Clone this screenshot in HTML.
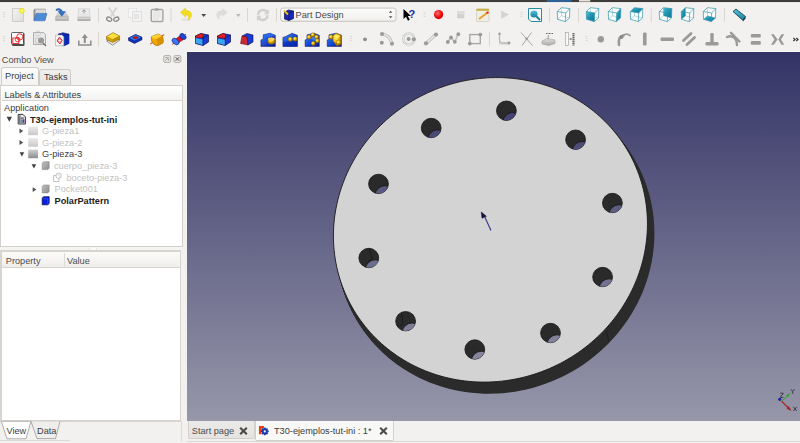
<!DOCTYPE html><html><head><meta charset="utf-8"><style>html,body{margin:0;padding:0;width:800px;height:443px;overflow:hidden;background:#f2f1f0;font-family:"Liberation Sans", sans-serif;position:relative}</style></head><body>
<svg style="position:absolute;left:0;top:0" width="800" height="52" viewBox="0 0 800 52">
<defs><linearGradient id="gdoc" x1="0" y1="0" x2="1" y2="1"><stop offset="0" stop-color="#f4f4f4"/><stop offset="1" stop-color="#dcdcdc"/></linearGradient><radialGradient id="gsun"><stop offset="0" stop-color="#ffffa0"/><stop offset="0.55" stop-color="#f0ea20"/><stop offset="1" stop-color="#f0ea20" stop-opacity="0"/></radialGradient><linearGradient id="ggray" x1="0" y1="0" x2="0" y2="1"><stop offset="0" stop-color="#e0e0e0"/><stop offset="1" stop-color="#a8a8a8"/></linearGradient><linearGradient id="gyel" x1="0" y1="0" x2="0" y2="1"><stop offset="0" stop-color="#ffe040"/><stop offset="1" stop-color="#c89a00"/></linearGradient><linearGradient id="gblue" x1="0" y1="0" x2="0" y2="1"><stop offset="0" stop-color="#3a7adf"/><stop offset="1" stop-color="#0a30b0"/></linearGradient><radialGradient id="gred" cx="0.4" cy="0.35"><stop offset="0" stop-color="#ff6a6a"/><stop offset="1" stop-color="#e00000"/></radialGradient><linearGradient id="gcube" x1="0" y1="0" x2="1" y2="1"><stop offset="0" stop-color="#58c0da"/><stop offset="0.5" stop-color="#1a90ad"/><stop offset="1" stop-color="#0a7890"/></linearGradient><linearGradient id="gpat" x1="0" y1="0" x2="1" y2="1"><stop offset="0" stop-color="#3a8af8"/><stop offset="0.6" stop-color="#1040d0"/><stop offset="1" stop-color="#0a1a90"/></linearGradient><radialGradient id="gyel2" cx="0.4" cy="0.35"><stop offset="0" stop-color="#fff070"/><stop offset="0.6" stop-color="#f0c010"/><stop offset="1" stop-color="#b08000"/></radialGradient><linearGradient id="gcombo" x1="0" y1="0" x2="0" y2="1"><stop offset="0" stop-color="#fdfdfc"/><stop offset="1" stop-color="#f0efed"/></linearGradient><linearGradient id="gteal" x1="0" y1="0" x2="0" y2="1"><stop offset="0" stop-color="#56c0dc"/><stop offset="1" stop-color="#1a7f9a"/></linearGradient></defs>
<rect x="0" y="0" width="800" height="2.3" fill="#3d3c38"/>
<rect x="0" y="2.3" width="800" height="1" fill="#f9f9f8"/>
<rect x="546.8" y="0" width="24.7" height="2" fill="#2a6ab0" opacity="0.8"/><rect x="579" y="0" width="11.3" height="1.6" fill="#e6e2da"/>
<g fill="#dcd9d5"><rect x="3" y="12" width="2" height="1"/><rect x="3" y="14" width="2" height="1"/><rect x="3" y="16" width="2" height="1"/></g>
<g transform="translate(12,8)"><path d="M0.5,0.5 h11 v13 h-11 Z" fill="url(#gdoc)" stroke="#c4c4c4" stroke-width="0.8"/><circle cx="9.8" cy="2.8" r="3.6" fill="url(#gsun)"/></g>
<g transform="translate(33,8)"><path d="M0.5,2.5 L1.5,0.8 H12.5 V12 H0.5 Z" fill="#8e8e8e"/><path d="M2.5,1.5 H12 V9 H2.5 Z" fill="#e6e6e6"/><path d="M3.5,3 H11 M3.5,4.5 H11" stroke="#c0c0c0" stroke-width="0.6"/><path d="M0.8,12.8 L3.2,5.5 H14 L11.8,12.8 Z" fill="#4b8ad6" stroke="#2c5ea8" stroke-width="0.5"/></g>
<g transform="translate(55,8)"><path d="M0.5,8.5 L2.8,4 H11.2 L13.5,8.5 V13 H0.5 Z" fill="url(#ggray)"/><path d="M0.5,8.5 H13.5 V13 H0.5 Z" fill="#b4b4b4"/><path d="M1.5,9.5 H12.5 V10.5 H1.5Z" fill="#d8d8d8"/><path d="M1,1.2 C3.5,0 6.5,0.5 7.5,3.5 L10.5,3.5 L6.8,8.3 L3.2,3.5 L5.2,3.5 C4.5,2.3 3,1.8 1,2.6 Z" fill="#2e74c8" stroke="#1a4a90" stroke-width="0.4"/></g>
<g transform="translate(77,8)"><path d="M1.5,0.8 h11 v6 h-11 Z" fill="#ececec" stroke="#c4c4c4" stroke-width="0.6"/><path d="M7,5.5 v-3.5 M5.3,3.6 L7,1.8 L8.7,3.6" stroke="#9a9a9a" stroke-width="1" fill="none"/><path d="M0.5,6.5 h13 v6.5 h-13 Z" fill="url(#ggray)"/><rect x="0.5" y="6.5" width="13" height="2" fill="#e8e8e8"/><rect x="1.5" y="10" width="11" height="1" fill="#d4d4d4"/></g>
<rect x="98.0" y="8" width="1" height="14" fill="#dad7d3"/>
<path d="M108.8,7.5 L114.5,16.5 M116.6,7.5 L110.9,16.5" stroke="#d4d4d4" stroke-width="1.8"/><ellipse cx="109.2" cy="19.2" rx="2.7" ry="1.9" transform="rotate(25 109.2 19.2)" fill="none" stroke="#8c8c8c" stroke-width="1.3"/><ellipse cx="116.3" cy="19.2" rx="2.7" ry="1.9" transform="rotate(-25 116.3 19.2)" fill="none" stroke="#8c8c8c" stroke-width="1.3"/>
<g transform="translate(128,8)"><path d="M0.5,0.5 h8 v9 h-8 Z" fill="#f6f6f6" stroke="#dedede" stroke-width="0.7"/><path d="M4.5,3.5 h9 v10 h-9 Z" fill="#f2f2f2" stroke="#d6d6d6" stroke-width="0.7"/><rect x="6" y="6" width="5" height="5" fill="#e4e4e4"/></g>
<g transform="translate(150,8)"><rect x="1.3" y="1.5" width="11.6" height="12" rx="1" fill="#f0f0f0" stroke="#a4a4a4" stroke-width="1.4"/><path d="M3,3.5 h8 v7 l-2,2 h-6 Z" fill="#e8e8e8"/><path d="M9,12.5 l2,-2 h-2 Z" fill="#fff"/><rect x="4.8" y="0.3" width="3.8" height="2.4" rx="0.8" fill="#a4a4a4"/></g>
<rect x="170.5" y="8" width="1" height="14" fill="#dad7d3"/>
<ellipse cx="186" cy="19.5" rx="5" ry="1.3" fill="#000" opacity="0.06"/><path d="M180.4,12.2 L185.6,7.9 V10.3 C189.5,10.5 192,12.5 191.5,15.5 C191,17.8 189.5,19.5 187.8,20 C189,18.5 189,16.5 187.5,15.5 C186.8,15 186.2,14.9 185.6,14.9 V17.2 Z" fill="#f2dc20" stroke="#e0c000" stroke-width="0.4"/>
<path d="M201.3,14 h4.8 l-2.4,3 Z" fill="#4a4a4a"/>
<path d="M227.6,12.2 L222.4,7.9 V10.3 C218.5,10.5 216,12.5 216.5,15.5 C217,17.8 218.5,19.5 220.2,20 C219,18.5 219,16.5 220.5,15.5 C221.2,15 221.8,14.9 222.4,14.9 V17.2 Z" fill="#dcdcdc"/>
<path d="M236,14 h4.6 l-2.3,2.9 Z" fill="#b4b4b4"/>
<rect x="247.0" y="8" width="1" height="14" fill="#dad7d3"/>
<g transform="translate(256,8)"><path d="M1,6.8 C1,3 3.8,0.8 6.8,0.8 C8.8,0.8 10.3,1.6 11.3,2.6 L12.8,1.2 V6.2 H8 L9.6,4.6 C8.9,3.8 8,3.3 6.8,3.3 C4.8,3.3 3.4,4.8 3.4,6.8 Z" fill="#d0d0d0"/><path d="M12.6,7.2 C12.6,11 9.8,13.2 6.8,13.2 C4.8,13.2 3.3,12.4 2.3,11.4 L0.8,12.8 V7.8 H5.6 L4,9.4 C4.7,10.2 5.6,10.7 6.8,10.7 C8.8,10.7 10.2,9.2 10.2,7.2 Z" fill="#d0d0d0"/></g>
<rect x="276.0" y="8" width="1" height="14" fill="#dad7d3"/>
<rect x="280.6" y="8.1" width="115.4" height="13.2" rx="2.5" fill="url(#gcombo)" stroke="#bcb8b3" stroke-width="0.8"/>
<g transform="translate(283.5,9.5)"><path d="M1,2.5 L5,0.5 L10,1.5 V9 L5.5,11 L1,9.5 Z" fill="#1a2ab8" stroke="#0a0a40" stroke-width="0.7"/><path d="M1,2.5 L5.5,3.8 L10,1.5 M5.5,3.8 V11" stroke="#0a0a40" stroke-width="0.6" fill="none"/><path d="M0.5,1 L4.5,5" stroke="#e8c020" stroke-width="2"/></g>
<text x="295.6" y="18.1" font-family="Liberation Sans" font-size="9.2" fill="#4a4a4a">Part Design</text>
<path d="M388.8,12.8 L390.6,10.8 L392.4,12.8 Z M388.8,16.3 L390.6,18.3 L392.4,16.3 Z" fill="#555"/>
<g transform="translate(403,8)"><path d="M0.5,1 V11 L3,8.8 L5,12.8 L6.8,11.8 L4.8,8 H8 Z" fill="#000"/><text x="5.5" y="9.5" font-family="Liberation Sans" font-weight="bold" font-size="11" fill="#1a2aa8">?</text></g>
<g fill="#dcd9d5"><rect x="423.5" y="12" width="2" height="1"/><rect x="423.5" y="14" width="2" height="1"/><rect x="423.5" y="16" width="2" height="1"/></g>
<circle cx="438.6" cy="14.6" r="4.6" fill="url(#gred)"/>
<rect x="457" y="11" width="7.3" height="7.3" fill="#d0d0d0"/><rect x="457" y="11" width="7.3" height="3.5" fill="#dcdcdc"/>
<g transform="translate(476,8)"><rect x="0.5" y="1" width="12.5" height="12.5" rx="1" fill="#f0eee4" stroke="#c8c4b0" stroke-width="0.6"/><rect x="0.5" y="0.8" width="12.5" height="2" fill="#c8b040"/><path d="M3,11 L11,5" stroke="#e8a030" stroke-width="2"/><circle cx="11.5" cy="4.6" r="1.2" fill="#e02020"/></g>
<path d="M501.2,10.5 L509.2,14.6 L501.2,18.7 Z" fill="#d4d4d4"/>
<g fill="#dcd9d5"><rect x="520.5" y="12" width="2" height="1"/><rect x="520.5" y="14" width="2" height="1"/><rect x="520.5" y="16" width="2" height="1"/></g>
<g transform="translate(528,8)"><path d="M0.5,0.5 H13.5 V13.5 H3 L0.5,11 Z" fill="#f4fafc" stroke="#2a8aa0" stroke-width="1"/><circle cx="6" cy="6" r="3.6" fill="url(#gteal)"/><path d="M8.5,8.5 L12,12" stroke="#1a7f9a" stroke-width="2"/></g>
<rect x="549.0" y="8" width="1" height="14" fill="#dad7d3"/>
<g transform="translate(557,8)"><path d="M0.3,3.5 L4.4,-0.3 L12.8,0.6 L12.5,10 L8.3,13.6 L0.5,11.3 Z" fill="#fbfdfd"/><path d="M4.4,-0.3 L4.5,7.8 L0.5,11.3 M4.5,7.8 L12.5,10" fill="none" stroke="#3293ac" stroke-width="0.45" opacity="0.7"/><path d="M0.3,3.5 L4.4,-0.3 L12.8,0.6 L12.5,10 L8.3,13.6 L0.5,11.3 Z M0.3,3.5 L8.7,5 L12.8,0.6 M8.7,5 L8.3,13.6" fill="none" stroke="#3293ac" stroke-width="0.7" stroke-linejoin="round"/></g>
<rect x="578.0" y="8" width="1" height="14" fill="#dad7d3"/>
<g transform="translate(586,8)"><path d="M0.3,3.5 L4.4,-0.3 L12.8,0.6 L12.5,10 L8.3,13.6 L0.5,11.3 Z" fill="#fbfdfd"/><path d="M0.3,3.5 L8.7,5 L8.3,13.6 L0.5,11.3 Z" fill="url(#gcube)"/><path d="M4.4,-0.3 L4.5,7.8 L0.5,11.3 M4.5,7.8 L12.5,10" fill="none" stroke="#3293ac" stroke-width="0.45" opacity="0.7"/><path d="M0.3,3.5 L4.4,-0.3 L12.8,0.6 L12.5,10 L8.3,13.6 L0.5,11.3 Z M0.3,3.5 L8.7,5 L12.8,0.6 M8.7,5 L8.3,13.6" fill="none" stroke="#3293ac" stroke-width="0.7" stroke-linejoin="round"/></g>
<g transform="translate(608,8)"><path d="M0.3,3.5 L4.4,-0.3 L12.8,0.6 L12.5,10 L8.3,13.6 L0.5,11.3 Z" fill="#fbfdfd"/><path d="M8.7,5 L12.8,0.6 L12.5,10 L8.3,13.6 Z" fill="url(#gcube)"/><path d="M4.4,-0.3 L4.5,7.8 L0.5,11.3 M4.5,7.8 L12.5,10" fill="none" stroke="#3293ac" stroke-width="0.45" opacity="0.7"/><path d="M0.3,3.5 L4.4,-0.3 L12.8,0.6 L12.5,10 L8.3,13.6 L0.5,11.3 Z M0.3,3.5 L8.7,5 L12.8,0.6 M8.7,5 L8.3,13.6" fill="none" stroke="#3293ac" stroke-width="0.7" stroke-linejoin="round"/></g>
<g transform="translate(630,8)"><path d="M0.3,3.5 L4.4,-0.3 L12.8,0.6 L12.5,10 L8.3,13.6 L0.5,11.3 Z" fill="#fbfdfd"/><path d="M0.3,3.5 L4.4,-0.3 L12.8,0.6 L8.7,5 Z" fill="url(#gcube)"/><path d="M4.4,-0.3 L4.5,7.8 L0.5,11.3 M4.5,7.8 L12.5,10" fill="none" stroke="#3293ac" stroke-width="0.45" opacity="0.7"/><path d="M0.3,3.5 L4.4,-0.3 L12.8,0.6 L12.5,10 L8.3,13.6 L0.5,11.3 Z M0.3,3.5 L8.7,5 L12.8,0.6 M8.7,5 L8.3,13.6" fill="none" stroke="#3293ac" stroke-width="0.7" stroke-linejoin="round"/></g>
<rect x="650.8" y="8" width="1" height="14" fill="#dad7d3"/>
<g transform="translate(659,8)"><path d="M0.3,3.5 L4.4,-0.3 L12.8,0.6 L12.5,10 L8.3,13.6 L0.5,11.3 Z" fill="#fbfdfd"/><path d="M4.4,-0.3 L12.8,0.6 L12.5,10 L4.5,7.8 Z" fill="url(#gcube)"/><path d="M4.4,-0.3 L4.5,7.8 L0.5,11.3 M4.5,7.8 L12.5,10" fill="none" stroke="#3293ac" stroke-width="0.45" opacity="0.7"/><path d="M0.3,3.5 L4.4,-0.3 L12.8,0.6 L12.5,10 L8.3,13.6 L0.5,11.3 Z M0.3,3.5 L8.7,5 L12.8,0.6 M8.7,5 L8.3,13.6" fill="none" stroke="#3293ac" stroke-width="0.7" stroke-linejoin="round"/></g>
<g transform="translate(681,8)"><path d="M0.3,3.5 L4.4,-0.3 L12.8,0.6 L12.5,10 L8.3,13.6 L0.5,11.3 Z" fill="#fbfdfd"/><path d="M0.3,3.5 L4.4,-0.3 L4.5,7.8 L0.5,11.3 Z" fill="url(#gcube)"/><path d="M4.4,-0.3 L4.5,7.8 L0.5,11.3 M4.5,7.8 L12.5,10" fill="none" stroke="#3293ac" stroke-width="0.45" opacity="0.7"/><path d="M0.3,3.5 L4.4,-0.3 L12.8,0.6 L12.5,10 L8.3,13.6 L0.5,11.3 Z M0.3,3.5 L8.7,5 L12.8,0.6 M8.7,5 L8.3,13.6" fill="none" stroke="#3293ac" stroke-width="0.7" stroke-linejoin="round"/></g>
<g transform="translate(703,8)"><path d="M0.3,3.5 L4.4,-0.3 L12.8,0.6 L12.5,10 L8.3,13.6 L0.5,11.3 Z" fill="#fbfdfd"/><path d="M0.5,11.3 L4.5,7.8 L12.5,10 L8.3,13.6 Z" fill="url(#gcube)"/><path d="M4.4,-0.3 L4.5,7.8 L0.5,11.3 M4.5,7.8 L12.5,10" fill="none" stroke="#3293ac" stroke-width="0.45" opacity="0.7"/><path d="M0.3,3.5 L4.4,-0.3 L12.8,0.6 L12.5,10 L8.3,13.6 L0.5,11.3 Z M0.3,3.5 L8.7,5 L12.8,0.6 M8.7,5 L8.3,13.6" fill="none" stroke="#3293ac" stroke-width="0.7" stroke-linejoin="round"/></g>
<rect x="724.0" y="8" width="1" height="14" fill="#dad7d3"/>
<g transform="translate(732,8)"><path d="M1,3.5 L4,1 L13.5,8.5 L10.5,12 Z" fill="url(#gteal)" stroke="#0a3a48" stroke-width="0.8"/><path d="M10.5,12 L13.5,8.5 L13.5,10.5 L11,13.5 Z" fill="#0a3a48"/></g>
<g fill="#dcd9d5"><rect x="3" y="36" width="2" height="1"/><rect x="3" y="38" width="2" height="1"/><rect x="3" y="40" width="2" height="1"/></g>
<g transform="translate(11,32)"><rect x="1" y="1" width="12.5" height="13" rx="1.2" fill="#4a4a4a"/><rect x="0.5" y="0.5" width="12" height="12" rx="1" fill="#fbfbfb" stroke="#3a3a3a" stroke-width="0.8"/><rect x="1.8" y="6" width="6" height="5.5" fill="none" stroke="#e82020" stroke-width="0.9"/><circle cx="8.8" cy="4.9" r="3.1" fill="none" stroke="#e82020" stroke-width="0.9"/><circle cx="6.6" cy="7.6" r="2.3" fill="none" stroke="#e82020" stroke-width="0.8"/></g>
<g transform="translate(33,32)"><path d="M0.5,0.5 h10 l2,2 v10 h-12 Z" fill="#e8e8e8" stroke="#a0a0a0" stroke-width="0.8"/><path d="M2.5,6 h4 v5 h-4 Z M5,4 a2.5,2.5 0 1 1 0.1,0" fill="none" stroke="#c8c8c8" stroke-width="0.8"/><circle cx="8" cy="8.5" r="3" fill="#999"/><path d="M10,11 L13,14" stroke="#777" stroke-width="1.5"/></g>
<g transform="translate(55,32)"><path d="M3.5,2 L8,0.8 L14,2.2 V11.5 L9,13.8 L3.5,12 Z" fill="#1038d8" stroke="#0a0a50" stroke-width="0.6"/><path d="M8,3.2 L14,2.2 V11.5 L9,13.8 Z" fill="#0a2ab8"/><path d="M3.5,2 L9,3.3 L14,2.2" fill="none" stroke="#0a0a50" stroke-width="0.5"/><path d="M0.5,3 h6.5 l1.8,1.8 v9 h-8.3 Z" fill="#f4f4f4" stroke="#9a9a9a" stroke-width="0.5"/><path d="M2,9 L4.5,5 L7.3,8.5 L5,12 Z" fill="none" stroke="#e02020" stroke-width="0.8"/><circle cx="4.6" cy="8.5" r="1.8" fill="none" stroke="#e02020" stroke-width="0.7"/></g>
<g transform="translate(78,32)"><path d="M0.8,8.5 V13 H12.8 V8.5" fill="none" stroke="#8c8c8c" stroke-width="1.5"/><path d="M6.8,11 V5" stroke="#8c8c8c" stroke-width="2"/><path d="M3.8,6 L6.8,2 L9.8,6 Z" fill="#8c8c8c"/></g>
<rect x="98.0" y="32" width="1" height="14" fill="#dad7d3"/>
<path d="M106.7,41 L112.6,45.2 L120.1,39.8 L114,36.5 Z" fill="none" stroke="#707070" stroke-width="0.8"/>
<path d="M106.5,36.6 L113.1,32.8 L119.6,36.1 V39 L112.6,42.6 L106.5,39.5 Z" fill="#d8a800" stroke="#6a5000" stroke-width="0.5"/>
<path d="M106.5,36.6 L113.1,32.8 L119.6,36.1 L112.6,39.6 Z" fill="#ffe040" stroke="#8a7000" stroke-width="0.4"/>
<path d="M112.6,39.6 L119.6,36.1 V39 L112.6,42.6 Z" fill="#c09000"/>
<path d="M128.5,38 L135.5,34.5 L142,37.3 V39.8 L134.5,43.5 L128.5,40.5 Z" fill="#0a30c0" stroke="#0a0a50" stroke-width="0.5"/>
<path d="M128.5,38 L135.5,34.5 L142,37.3 L134.5,41 Z" fill="#2a7af0" stroke="#0a0a50" stroke-width="0.4"/>
<path d="M132.5,37.7 L135.5,36.2 L138.5,37.5 L135.2,39.2 Z" fill="#e01010" stroke="#600" stroke-width="0.3"/>
<path d="M150.2,44.1 L164.2,34.5" stroke="#f02020" stroke-width="1"/>
<path d="M151.3,36.8 L157.8,33.9 L162.3,36 C163.3,38 163.5,41.5 163,43 L157.8,45.7 C154.5,45.5 151.8,43 151.5,40.5 Z" fill="#f0a800" stroke="#6a4a00" stroke-width="0.5"/>
<path d="M151.3,36.8 L157.8,33.9 L162.3,36 L156.5,39 C154.5,39.2 152.5,38.3 151.3,36.8 Z" fill="#ffd030"/>
<path d="M156.5,39 L162.3,36 C163.3,38 163.5,41.5 163,43 L157.8,45.7 C157.5,43 157.2,41 156.5,39 Z" fill="#d89000"/>
<path d="M172.2,44.3 L186,34.2" stroke="#f02020" stroke-width="1"/>
<path d="M176,39 C178,37 180,35.5 182,35 L183,40 C181,41 179,42.5 177.5,44 Z" fill="#e01020" stroke="#500" stroke-width="0.4"/>
<ellipse cx="175.5" cy="41.5" rx="2.6" ry="4" transform="rotate(-50 175.5 41.5)" fill="#3a7af0" stroke="#0a0a60" stroke-width="0.5"/>
<ellipse cx="183" cy="36.5" rx="2.4" ry="3.6" transform="rotate(-50 183 36.5)" fill="#1a4ad8" stroke="#0a0a60" stroke-width="0.5"/>
<g transform="translate(195,32)"><path d="M0.5,4 L6,1.5 L13.5,3 V10 L8,13.5 L0.5,11.5 Z" fill="#1a3ad0" stroke="#0a0a50" stroke-width="0.7"/><path d="M0.5,4 L8,6 L13.5,3 M8,6 V13.5" fill="none" stroke="#0a0a50" stroke-width="0.6"/><path d="M0.5,4 L6,1.5 L8.5,2.5 C8,4.5 7.5,6 7,6 L0.8,5.5 Z" fill="#e02020" stroke="#500" stroke-width="0.4"/><path d="M0.8,6 L7.5,7.5 V13 L0.8,11 Z" fill="#38a8f0"/></g>
<g transform="translate(217,32)"><path d="M0.5,4 L6,1.5 L13.5,3 V10 L8,13.5 L0.5,11.5 Z" fill="#1a3ad0" stroke="#0a0a50" stroke-width="0.7"/><path d="M0.5,4 L8,6 L13.5,3 M8,6 V13.5" fill="none" stroke="#0a0a50" stroke-width="0.6"/><path d="M0.5,4 L6,1.5 L9,2.6 L8,6.5 L0.8,5.5 Z" fill="#e02020" stroke="#500" stroke-width="0.4"/><path d="M0.8,6.5 L7.8,7.8 V13 L0.8,11 Z" fill="#38a8f0"/></g>
<g transform="translate(240,32)"><path d="M2,4 L7,1.5 L13,3 V10 L8,13 Z" fill="#1a3ad0" stroke="#0a0a50" stroke-width="0.6"/><path d="M2,4 L7,5 L8,13 L0.5,11.5 Z" fill="#c82a3a" stroke="#500" stroke-width="0.5"/></g>
<path d="M260.9,46.4 V40 L263.2,39 V34.8 L270,33.2 L275.3,35.3 V46.4 Z" fill="url(#gpat)" stroke="#0a0a60" stroke-width="0.5"/>
<path d="M263.2,34.8 L270,33.2 L275.3,35.3 L268,37 Z" fill="#2a6ae8"/><ellipse cx="271.4" cy="41" rx="3.6" ry="3.2" fill="url(#gyel2)" stroke="#806000" stroke-width="0.4"/><ellipse cx="271.4" cy="39" rx="3.2" ry="1.5" fill="#f8e060"/><path d="M262,45 L275,36" stroke="#e03030" stroke-width="0.5" stroke-dasharray="1 1"/>
<path d="M282.9,46.4 V37.4 L285.8,36.4 L292.1,33.2 L297.4,35.3 V46.4 Z" fill="url(#gpat)" stroke="#0a0a60" stroke-width="0.5"/>
<path d="M283,42 L297.3,40.5 V46.4 H283 Z" fill="#0a2ab0" opacity="0.6"/><circle cx="290.3" cy="39.3" r="2.2" fill="url(#gyel2)" stroke="#806000" stroke-width="0.4"/><circle cx="295.2" cy="39" r="2.2" fill="url(#gyel2)" stroke="#806000" stroke-width="0.4"/>
<path d="M305.1,46.4 V40 L307,39 V34.8 L314,33.2 L319.3,35.3 V46.4 Z" fill="url(#gpat)" stroke="#0a0a60" stroke-width="0.5"/>
<path d="M310,38 L314,36.5 L318,38.5 L314,41 Z" fill="#3a7af0"/>
<circle cx="309.1" cy="37.2" r="2.1" fill="url(#gyel2)" stroke="#806000" stroke-width="0.4"/>
<circle cx="312.8" cy="34.9" r="2.1" fill="url(#gyel2)" stroke="#806000" stroke-width="0.4"/>
<circle cx="316.6" cy="37" r="2.1" fill="url(#gyel2)" stroke="#806000" stroke-width="0.4"/>
<circle cx="317.3" cy="40.8" r="2.1" fill="url(#gyel2)" stroke="#806000" stroke-width="0.4"/>
<circle cx="313.2" cy="43.4" r="2.1" fill="url(#gyel2)" stroke="#806000" stroke-width="0.4"/>
<path d="M327.2,46.4 V40 L329,39 V34.8 L336.1,33.2 L341.4,35.3 V46.4 Z" fill="url(#gpat)" stroke="#0a0a60" stroke-width="0.5"/>
<path d="M332.5,36 L336.1,33.2 L341.4,35.3 V44 L337,46 L333,41 Z" fill="url(#gyel2)" stroke="#806000" stroke-width="0.4"/><path d="M333.5,36.5 L337,35 L340.5,36 L337,38.2 Z" fill="#fff060"/><circle cx="331" cy="37" r="2.2" fill="url(#gyel2)" stroke="#806000" stroke-width="0.4"/><circle cx="338.5" cy="42.5" r="2.4" fill="url(#gyel2)" stroke="#806000" stroke-width="0.4"/>
<g fill="#dcd9d5"><rect x="350" y="36" width="2" height="1"/><rect x="350" y="38" width="2" height="1"/><rect x="350" y="40" width="2" height="1"/></g>
<circle cx="365" cy="39.3" r="1.9" fill="#8c8c8c"/>
<g transform="translate(380,32)"><path d="M2,2 C7,2.5 10.5,6 12,11.5" fill="none" stroke="#bdbdbd" stroke-width="3"/><path d="M2,2 C7,2.5 10.5,6 12,11.5" fill="none" stroke="#e6e6e6" stroke-width="1.6"/><circle cx="2" cy="2" r="2" fill="#9a9a9a"/><circle cx="1.8" cy="10.7" r="2" fill="#9a9a9a"/><circle cx="12" cy="11.8" r="2" fill="#9a9a9a"/></g>
<g transform="translate(402,32)"><circle cx="6.8" cy="7" r="5.6" fill="none" stroke="#c8c8c8" stroke-width="2.4"/><circle cx="6.8" cy="7" r="5.6" fill="none" stroke="#eeeeee" stroke-width="1"/><circle cx="6.6" cy="7" r="2" fill="#9a9a9a"/><circle cx="11.8" cy="7.3" r="2" fill="#9a9a9a"/></g>
<g transform="translate(424,32)"><path d="M2,11.3 L12,2.5" stroke="#bdbdbd" stroke-width="3"/><path d="M2,11.3 L12,2.5" stroke="#ececec" stroke-width="1.5"/><circle cx="2" cy="11.3" r="2.1" fill="#9a9a9a"/><circle cx="12" cy="2.5" r="2.1" fill="#9a9a9a"/></g>
<g transform="translate(446,32)"><path d="M1.8,10 L5,5.5 L8.7,9.8 L12.3,2.2" fill="none" stroke="#c4c4c4" stroke-width="1.8"/><circle cx="1.8" cy="10" r="1.9" fill="#9a9a9a"/><circle cx="5" cy="5.5" r="1.9" fill="#9a9a9a"/><circle cx="8.8" cy="9.8" r="1.9" fill="#9a9a9a"/><circle cx="12.3" cy="2.2" r="1.9" fill="#9a9a9a"/></g>
<g transform="translate(468,32)"><rect x="1.8" y="2.6" width="10.5" height="9" fill="none" stroke="#a8a8a8" stroke-width="1.4"/><circle cx="12.3" cy="2.6" r="1.9" fill="#9a9a9a"/><circle cx="1.8" cy="11.6" r="1.9" fill="#9a9a9a"/></g>
<rect x="489.0" y="32" width="1" height="14" fill="#dad7d3"/>
<g transform="translate(497,32)"><path d="M2.5,1 V12 H13" fill="none" stroke="#c8c8c8" stroke-width="0.9"/><path d="M2.5,2 V7.5 C2.5,9.5 4,11 6,11 H12" fill="none" stroke="#b8b8b8" stroke-width="1.3"/><circle cx="2.5" cy="1.8" r="1.2" fill="#9a9a9a"/><circle cx="12" cy="11" r="1.4" fill="#9a9a9a"/></g>
<g transform="translate(520,32)"><path d="M1,0.5 L12.5,13.5 M11.5,0.5 L2,13.5" stroke="#a8a8a8" stroke-width="1"/><circle cx="6.6" cy="6.8" r="1.3" fill="#999"/></g>
<g transform="translate(541,32)"><path d="M1,9 L6,6.5 L14,8 V11.5 L8,13.5 L1,12 Z" fill="url(#ggray)" stroke="#999" stroke-width="0.5"/><path d="M5,1.5 h7" stroke="#666" stroke-width="1.2" stroke-dasharray="1 0.5"/><path d="M7.5,3 L7,7" stroke="#777" stroke-width="0.7"/></g>
<g transform="translate(565,32)"><rect x="0.5" y="0.5" width="3" height="13" fill="#f8f8f8" stroke="#9a9a9a" stroke-width="0.6"/><path d="M8.5,1 V13.5" stroke="#707070" stroke-width="2.2" stroke-dasharray="1.4 0.5"/><path d="M3.5,7 H8" stroke="#999" stroke-width="0.6"/><circle cx="5.8" cy="7" r="0.9" fill="#888"/></g>
<g fill="#dcd9d5"><rect x="585.5" y="36" width="2" height="1"/><rect x="585.5" y="38" width="2" height="1"/><rect x="585.5" y="40" width="2" height="1"/></g>
<circle cx="600.8" cy="39.3" r="3.2" fill="#9a9a9a"/>
<g transform="translate(617,32)"><path d="M2,13 C1,7 3,4 6.5,3.5" fill="none" stroke="#9a9a9a" stroke-width="2.6" stroke-linecap="round"/><path d="M6,3.5 C8,2 11,2 13,3.5" fill="none" stroke="#9a9a9a" stroke-width="1.7" stroke-linecap="round"/><circle cx="4.5" cy="5" r="2" fill="#8a8a8a"/></g>
<rect x="643" y="32.5" width="3.6" height="13" rx="1.2" fill="#9a9a9a"/>
<rect x="660.5" y="37.5" width="13.5" height="3.5" rx="1.2" fill="#9a9a9a"/>
<g transform="translate(682,32)"><path d="M1.5,8.5 L9,1.5 M5,12.5 L12.5,5.5" stroke="#9a9a9a" stroke-width="2.8" stroke-linecap="round"/></g>
<g transform="translate(705,32)"><rect x="0.5" y="10" width="13" height="3.5" rx="1.2" fill="#9a9a9a"/><rect x="5.3" y="1" width="3.4" height="10" rx="1" fill="#9a9a9a"/></g>
<g transform="translate(726,32)"><path d="M1,5 C4,3.5 7,4 9.5,7 C10.5,8.5 11,10 11,13" fill="none" stroke="#9a9a9a" stroke-width="2.4" stroke-linecap="round"/><path d="M5,0.8 L13.5,9.5" stroke="#9a9a9a" stroke-width="2.4" stroke-linecap="round"/></g>
<rect x="750.8" y="34" width="10" height="3.6" rx="1" fill="#9a9a9a"/><rect x="750.8" y="40.9" width="10" height="3.8" rx="1" fill="#9a9a9a"/>
<path d="M771,34.2 L773.8,34.2 L777.6,39.4 L773.8,44.8 L771,44.8 L774.4,39.4 Z M784.3,34.2 L781.5,34.2 L778.2,39.4 L781.5,44.8 L784.3,44.8 L781,39.4 Z" fill="#9a9a9a"/>
<path d="M793.4,38 L795.1,39.5 L793.4,41 M796.3,38 L798,39.5 L796.3,41" fill="none" stroke="#2a2a2a" stroke-width="1.1"/>
</svg>
<div style="position:absolute;left:1.8px;top:55.77px;font-size:9.2px;line-height:9.2px;height:11.0px;white-space:nowrap;color:#4c4c4c;">Combo View</div>
<svg style="position:absolute;left:163px;top:55px" width="20" height="9" viewBox="0 0 20 9"><rect x="0.7" y="0.5" width="7" height="7" rx="1.5" fill="#e4e2df" stroke="#9d9a96" stroke-width="0.7"/><path d="M2.5,5.5 L5.5,2.5 M2.5,2.5 h2 M5.5,5.5 v-2" stroke="#888" stroke-width="0.7" fill="none"/><rect x="10.9" y="0.5" width="7" height="7" rx="1.5" fill="#e4e2df" stroke="#9d9a96" stroke-width="0.7"/><path d="M12.6,2.2 L16.2,5.8 M16.2,2.2 L12.6,5.8" stroke="#555" stroke-width="1"/></svg>
<div style="position:absolute;left:0.5px;top:67.3px;width:38.5px;height:19px;background:linear-gradient(#fbfbfa,#f4f3f2);border:1px solid #cfccc8;border-bottom:none;border-radius:3px 3px 0 0;box-sizing:border-box"></div>
<div style="position:absolute;left:39px;top:69px;width:31.5px;height:16.5px;background:linear-gradient(#f0efee,#e4e2df);border:1px solid #cfccc8;border-bottom:none;border-radius:3px 3px 0 0;box-sizing:border-box"></div>
<div style="position:absolute;left:5px;top:72.27px;font-size:9.2px;line-height:9.2px;height:11.0px;white-space:nowrap;color:#3c3c3c;">Project</div>
<div style="position:absolute;left:44px;top:72.97px;font-size:9.2px;line-height:9.2px;height:11.0px;white-space:nowrap;color:#3c3c3c;">Tasks</div>
<div style="position:absolute;left:0px;top:85.2px;width:183px;height:162px;background:#fff;border:1.5px solid #d3d0cc;box-sizing:border-box"></div>
<div style="position:absolute;left:1.5px;top:86.7px;width:180px;height:14.5px;background:linear-gradient(#ffffff,#f3f2f1);border-bottom:1px solid #d8d5d1;box-sizing:border-box"></div>
<div style="position:absolute;left:4.5px;top:90.57px;font-size:9.2px;line-height:9.2px;height:11.0px;white-space:nowrap;color:#3c3c3c;">Labels &amp; Attributes</div>
<div style="position:absolute;left:4px;top:103.97px;font-size:9.2px;line-height:9.2px;height:11.0px;white-space:nowrap;color:#3c3c3c;">Application</div>
<div style="position:absolute;left:30px;top:115.87px;font-size:9.2px;line-height:9.2px;height:11.0px;white-space:nowrap;color:#1e1e1e;font-weight:bold;">T30-ejemplos-tut-ini</div>
<div style="position:absolute;left:42px;top:127.37px;font-size:9.2px;line-height:9.2px;height:11.0px;white-space:nowrap;color:#c2c2c2;">G-pieza1</div>
<div style="position:absolute;left:42px;top:138.87px;font-size:9.2px;line-height:9.2px;height:11.0px;white-space:nowrap;color:#c2c2c2;">G-pieza-2</div>
<div style="position:absolute;left:42px;top:150.37px;font-size:9.2px;line-height:9.2px;height:11.0px;white-space:nowrap;color:#3c3c3c;">G-pieza-3</div>
<div style="position:absolute;left:54px;top:162.07px;font-size:9.2px;line-height:9.2px;height:11.0px;white-space:nowrap;color:#c2c2c2;">cuerpo_pieza-3</div>
<div style="position:absolute;left:66.5px;top:173.87px;font-size:9.2px;line-height:9.2px;height:11.0px;white-space:nowrap;color:#c2c2c2;">boceto-pieza-3</div>
<div style="position:absolute;left:54.5px;top:185.37px;font-size:9.2px;line-height:9.2px;height:11.0px;white-space:nowrap;color:#c2c2c2;">Pocket001</div>
<div style="position:absolute;left:54.5px;top:197.17px;font-size:9.2px;line-height:9.2px;height:11.0px;white-space:nowrap;color:#1e1e1e;font-weight:bold;">PolarPattern</div>
<svg style="position:absolute;left:0;top:100px" width="80" height="110" viewBox="0 100 80 110"><defs><linearGradient id="fg" x1="0" y1="0" x2="0" y2="1"><stop offset="0" stop-color="#dcdcdc"/><stop offset="1" stop-color="#a4a4a4"/></linearGradient><linearGradient id="fg2" x1="0" y1="0" x2="0" y2="1"><stop offset="0" stop-color="#cfcfcf"/><stop offset="1" stop-color="#8c8c8c"/></linearGradient><linearGradient id="cg" x1="0" y1="0" x2="1" y2="1"><stop offset="0" stop-color="#b0b0b0"/><stop offset="1" stop-color="#707070"/></linearGradient></defs><path d="M6.6,116.8 L12,116.8 L9.3,121.8 Z" fill="#404040"/><path d="M19.5,128.6 L23.2,131 L19.5,133.4 Z" fill="#505050"/><path d="M19.5,140.1 L23.2,142.5 L19.5,144.9 Z" fill="#505050"/><path d="M19.6,152.3 L24.2,152.3 L21.9,156.5 Z" fill="#404040"/><path d="M31.6,164.2 L36.2,164.2 L33.9,168.4 Z" fill="#404040"/><path d="M32.7,187.3 L36.4,189.6 L32.7,192 Z" fill="#505050"/><path d="M18.2,114.4 h4.8 l2.4,2.4 v7.2 h-7.2 Z" fill="#e8e8e8" stroke="#202020" stroke-width="0.9"/><rect x="19.2" y="115.5" width="1.3" height="7.6" fill="#606060"/><rect x="20.8" y="119.3" width="1.8" height="3.6" fill="#18a8c8"/><rect x="22.6" y="119.3" width="1.8" height="3.6" fill="#9a1a8a"/><rect x="20.8" y="117.5" width="3" height="1.2" fill="#505050"/><path d="M28.2,126.6 h9.8 v8.6 h-9.8 Z" fill="url(#fg)" opacity="0.6"/><path d="M28.2,138.1 h9.8 v8.6 h-9.8 Z" fill="url(#fg)" opacity="0.6"/><path d="M28.2,149.6 h9.8 v8.6 h-9.8 Z" fill="url(#fg2)"/><path d="M42.2,163 l1.5,-1.3 h5.5 v6.6 l-1.4,1.3 h-5.6 Z" fill="url(#cg)" stroke="#606060" stroke-width="0.5" opacity="0.8"/><path d="M42.2,186.3 l1.5,-1.3 h5.5 v6.6 l-1.4,1.3 h-5.6 Z" fill="url(#cg)" stroke="#606060" stroke-width="0.5" opacity="0.8"/><path d="M53.6,175.5 h5.3 v6 h-5.3 Z" fill="none" stroke="#b4b4b4" stroke-width="0.8"/><circle cx="58.6" cy="175.8" r="2.7" fill="#fff" stroke="#b4b4b4" stroke-width="0.8"/><path d="M57,175 h2.5 v2.5" fill="none" stroke="#c4c4c4" stroke-width="0.6"/><path d="M42.2,198 l1.5,-1.3 h5.5 v6.8 l-1.4,1.3 h-5.6 Z" fill="#0a20e0" stroke="#0a0a40" stroke-width="0.7"/><path d="M43.2,198.8 h4.6 v5" fill="none" stroke="#4a6af8" stroke-width="0.6"/></svg>
<div style="position:absolute;left:0px;top:246.8px;width:182px;height:3.5px;background:#f6f5f4"></div>
<div style="position:absolute;left:89px;top:247.5px;width:6px;height:2.5px;border-left:1px solid #e6e4e1;border-right:1px solid #e6e4e1;background:#fafafa"></div>
<div style="position:absolute;left:0px;top:250.3px;width:181.3px;height:171.5px;background:#fff;border:2px solid #d8d5d1;border-right:1.5px solid #d8d5d1;box-sizing:border-box"></div>
<div style="position:absolute;left:2px;top:252.3px;width:177.8px;height:15.8px;background:linear-gradient(#fbfbfa,#efeeed);border-bottom:1px solid #d6d3cf;box-sizing:border-box"></div>
<div style="position:absolute;left:64.3px;top:253px;width:1px;height:14px;background:#dedbd7"></div>
<div style="position:absolute;left:5.8px;top:256.97px;font-size:9.2px;line-height:9.2px;height:11.0px;white-space:nowrap;color:#4c4c4c;">Property</div>
<div style="position:absolute;left:67px;top:256.97px;font-size:9.2px;line-height:9.2px;height:11.0px;white-space:nowrap;color:#4c4c4c;">Value</div>
<svg style="position:absolute;left:0;top:420px" width="70" height="23" viewBox="0 420 70 23"><path d="M31,421.3 L37,438.6 L55.5,438.6 L60,421.3" fill="#efeeec" stroke="#8f8c88" stroke-width="0.7"/><path d="M1.3,421.3 L7,438.8 L26,438.8 L31,421.3 Z" fill="#ffffff" stroke="#8f8c88" stroke-width="0.7"/><rect x="1" y="420.4" width="181" height="1" fill="#d3d0cc"/><rect x="0" y="440" width="182.5" height="1" fill="#dcd9d5"/></svg>
<div style="position:absolute;left:181.2px;top:421px;width:1.3px;height:19.5px;background:#dcd9d5"></div>
<div style="position:absolute;left:6.5px;top:427.07px;font-size:9.2px;line-height:9.2px;height:11.0px;white-space:nowrap;color:#3c3c3c;">View</div>
<div style="position:absolute;left:37px;top:427.07px;font-size:9.2px;line-height:9.2px;height:11.0px;white-space:nowrap;color:#3c3c3c;">Data</div>
<div style="position:absolute;left:187px;top:51px;width:613px;height:1px;background:#f8f8f7"></div>
<svg width="613" height="369" viewBox="187 52 613 369" style="position:absolute;left:187px;top:52px;display:block">
<defs><linearGradient id="bg" gradientUnits="userSpaceOnUse" x1="0" y1="52" x2="0" y2="421"><stop offset="0" stop-color="#333366"/><stop offset="1" stop-color="#9797aa"/></linearGradient></defs>
<rect x="187" y="52" width="613" height="369" fill="url(#bg)"/>
<path d="M633.09,160.41 L635.60,165.78 L637.88,171.25 L639.94,176.80 L641.77,182.44 L643.36,188.16 L644.72,193.94 L645.84,199.78 L646.73,205.66 L647.37,211.58 L647.77,217.53 L647.93,223.50 L647.84,229.49 L647.52,235.47 L646.95,241.45 L646.14,247.41 L645.10,253.34 L643.81,259.24 L642.29,265.09 L640.53,270.89 L638.55,276.63 L636.33,282.30 L633.89,287.88 L631.23,293.38 L628.36,298.78 L625.27,304.08 L621.97,309.26 L618.48,314.33 L614.78,319.26 L610.90,324.06 L606.83,328.71 L602.58,333.21 L598.15,337.55 L593.57,341.73 L588.82,345.73 L583.92,349.56 L578.88,353.20 L573.70,356.66 L568.40,359.92 L562.97,362.98 L557.44,365.84 L551.80,368.49 L546.07,370.92 L540.25,373.14 L534.36,375.14 L528.39,376.91 L522.37,378.47 L516.31,379.79 L510.20,380.88 L504.06,381.74 L497.90,382.37 L491.73,382.76 L485.56,382.92 L479.40,382.84 L473.26,382.53 L467.14,381.98 L461.06,381.20 L455.02,380.19 L449.04,378.95 L443.13,377.48 L437.28,375.78 L431.52,373.86 L425.85,371.72 L420.29,369.35 L414.83,366.78 L409.48,363.99 L404.26,361.00 L399.18,357.81 L394.24,354.42 L389.44,350.84 L384.81,347.08 L380.33,343.14 L376.03,339.02 L371.90,334.73 L367.96,330.29 L364.20,325.69 L360.64,320.94 L357.28,316.05 L354.13,311.04 L351.19,305.89 L348.46,300.64 L345.96,295.27 L343.67,289.80 L341.61,284.24 L339.79,278.60 L338.19,272.89 L336.83,267.11 L335.71,261.27 L334.83,255.39 L334.19,249.47 L333.79,243.52 L333.63,237.55 L333.71,231.56 L334.04,225.58 L334.60,219.60 L335.41,213.64 L336.46,207.71 L337.75,201.81 L339.27,195.96 L341.02,190.16 L343.01,184.42 L345.22,178.75 L347.66,173.17 L350.32,167.67 L353.20,162.26 L356.29,156.97 L359.58,151.78 L363.08,146.72 L366.77,141.79 L370.66,136.99 L374.73,132.34 L378.98,127.84 L383.40,123.50 L387.99,119.32 L392.74,115.32 L397.63,111.49 L402.68,107.85 L407.85,104.39 L413.16,101.13 L418.58,98.07 L424.12,95.21 L429.76,92.56 L435.49,90.13 L441.31,87.91 L447.20,85.91 L453.16,84.13 L459.18,82.58 L465.25,81.26 L471.36,80.17 L477.50,79.31 L483.65,78.68 L489.82,78.29 L495.99,78.13 L502.16,78.21 L508.30,78.52 L514.42,79.07 L520.50,79.84 L526.53,80.86 L532.52,82.10 L538.43,83.57 L544.27,85.27 L550.03,87.19 L555.70,89.33 L561.27,91.69 L566.73,94.27 L572.07,97.05 L577.29,100.05 L582.38,103.24 L587.32,106.63 L592.11,110.20 L596.75,113.97 L601.22,117.91 L605.53,122.03 L609.66,126.32 L613.60,130.76 L617.35,135.36 L620.91,140.11 L624.27,145.00 L627.42,150.01 L630.37,155.16Z" fill="#2b2b2b"/>
<path d="M633.58,161.04 L636.09,166.41 L638.37,171.88 L640.43,177.45 L642.26,183.09 L643.86,188.81 L645.22,194.60 L646.34,200.44 L647.22,206.33 L647.87,212.26 L648.27,218.21 L648.43,224.19 L648.34,230.18 L648.02,236.17 L647.45,242.15 L646.64,248.11 L645.59,254.05 L644.30,259.95 L642.78,265.81 L641.02,271.62 L639.04,277.36 L636.82,283.04 L634.38,288.63 L631.72,294.13 L628.84,299.54 L625.75,304.84 L622.45,310.03 L618.95,315.10 L615.25,320.03 L611.36,324.83 L607.29,329.49 L603.03,333.99 L598.61,338.34 L594.01,342.52 L589.26,346.53 L584.36,350.36 L579.32,354.01 L574.13,357.47 L568.82,360.73 L563.39,363.79 L557.85,366.65 L552.21,369.30 L546.47,371.74 L540.65,373.96 L534.75,375.96 L528.78,377.74 L522.76,379.29 L516.68,380.62 L510.57,381.71 L504.43,382.57 L498.26,383.20 L492.09,383.59 L485.91,383.75 L479.75,383.67 L473.59,383.36 L467.47,382.81 L461.38,382.03 L455.34,381.02 L449.36,379.78 L443.44,378.30 L437.59,376.61 L431.82,374.68 L426.15,372.54 L420.57,370.17 L415.11,367.60 L409.76,364.81 L404.54,361.82 L399.45,358.62 L394.50,355.23 L389.71,351.65 L385.06,347.88 L380.59,343.93 L376.28,339.81 L372.15,335.52 L368.20,331.07 L364.44,326.47 L360.88,321.71 L357.52,316.82 L354.36,311.80 L351.42,306.65 L348.69,301.39 L346.18,296.02 L343.89,290.55 L341.83,284.99 L340.00,279.34 L338.41,273.62 L337.05,267.84 L335.92,261.99 L335.04,256.10 L334.40,250.18 L334.00,244.22 L333.84,238.24 L333.92,232.26 L334.25,226.27 L334.82,220.29 L335.63,214.32 L336.67,208.38 L337.96,202.48 L339.48,196.62 L341.24,190.81 L343.23,185.07 L345.45,179.40 L347.89,173.81 L350.55,168.30 L353.43,162.89 L356.52,157.59 L359.82,152.40 L363.32,147.34 L367.01,142.40 L370.90,137.60 L374.98,132.95 L379.23,128.44 L383.66,124.09 L388.25,119.91 L393.00,115.91 L397.90,112.07 L402.95,108.43 L408.13,104.97 L413.44,101.70 L418.87,98.64 L424.41,95.78 L430.05,93.13 L435.79,90.69 L441.62,88.47 L447.52,86.47 L453.48,84.69 L459.51,83.14 L465.58,81.82 L471.69,80.72 L477.84,79.86 L484.00,79.24 L490.18,78.84 L496.35,78.68 L502.52,78.76 L508.67,79.07 L514.79,79.62 L520.88,80.40 L526.92,81.41 L532.91,82.66 L538.83,84.13 L544.68,85.83 L550.44,87.75 L556.12,89.90 L561.69,92.26 L567.15,94.84 L572.50,97.62 L577.72,100.62 L582.81,103.81 L587.76,107.20 L592.56,110.79 L597.20,114.55 L601.68,118.50 L605.99,122.62 L610.12,126.91 L614.07,131.36 L617.82,135.97 L621.39,140.72 L624.75,145.61 L627.90,150.63 L630.85,155.78Z" fill="#2b2b2b"/>
<path d="M634.06,161.67 L636.57,167.05 L638.86,172.52 L640.92,178.09 L642.75,183.74 L644.35,189.47 L645.71,195.26 L646.84,201.10 L647.72,207.00 L648.36,212.93 L648.77,218.89 L648.92,224.88 L648.84,230.87 L648.51,236.86 L647.95,242.85 L647.14,248.82 L646.09,254.76 L644.80,260.67 L643.27,266.54 L641.51,272.35 L639.52,278.10 L637.31,283.78 L634.86,289.37 L632.20,294.88 L629.32,300.29 L626.22,305.60 L622.92,310.79 L619.42,315.86 L615.72,320.81 L611.83,325.61 L607.75,330.27 L603.49,334.78 L599.06,339.13 L594.46,343.31 L589.71,347.33 L584.80,351.16 L579.75,354.81 L574.56,358.27 L569.25,361.54 L563.82,364.61 L558.27,367.47 L552.62,370.12 L546.88,372.56 L541.05,374.78 L535.14,376.79 L529.17,378.57 L523.14,380.12 L517.06,381.44 L510.94,382.54 L504.79,383.40 L498.62,384.03 L492.44,384.42 L486.26,384.58 L480.09,384.50 L473.93,384.19 L467.80,383.64 L461.71,382.86 L455.66,381.85 L449.67,380.61 L443.75,379.13 L437.89,377.43 L432.12,375.50 L426.44,373.36 L420.86,370.99 L415.40,368.41 L410.04,365.62 L404.82,362.63 L399.72,359.43 L394.77,356.03 L389.97,352.45 L385.32,348.68 L380.84,344.73 L376.53,340.60 L372.39,336.31 L368.44,331.85 L364.68,327.24 L361.11,322.49 L357.75,317.59 L354.59,312.57 L351.64,307.42 L348.91,302.15 L346.40,296.77 L344.11,291.29 L342.05,285.73 L340.22,280.08 L338.62,274.35 L337.26,268.56 L336.14,262.71 L335.25,256.82 L334.61,250.89 L334.21,244.92 L334.05,238.94 L334.13,232.95 L334.46,226.95 L335.03,220.97 L335.84,215.00 L336.89,209.05 L338.18,203.14 L339.70,197.28 L341.46,191.47 L343.45,185.72 L345.67,180.04 L348.11,174.44 L350.77,168.94 L353.66,163.52 L356.75,158.22 L360.05,153.03 L363.55,147.95 L367.26,143.01 L371.15,138.21 L375.23,133.55 L379.48,129.04 L383.92,124.69 L388.51,120.50 L393.27,116.49 L398.17,112.66 L403.22,109.01 L408.41,105.54 L413.72,102.28 L419.16,99.21 L424.70,96.35 L430.35,93.70 L436.10,91.26 L441.93,89.03 L447.83,87.03 L453.80,85.25 L459.83,83.70 L465.91,82.37 L472.03,81.28 L478.18,80.42 L484.35,79.79 L490.53,79.40 L496.71,79.24 L502.88,79.31 L509.04,79.63 L515.17,80.17 L521.26,80.95 L527.31,81.97 L533.30,83.21 L539.23,84.69 L545.08,86.39 L550.85,88.31 L556.53,90.46 L562.11,92.83 L567.58,95.40 L572.93,98.19 L578.16,101.19 L583.25,104.39 L588.20,107.78 L593.01,111.37 L597.65,115.14 L602.13,119.09 L606.45,123.22 L610.58,127.51 L614.53,131.97 L618.29,136.57 L621.86,141.33 L625.22,146.22 L628.38,151.25 L631.33,156.40Z" fill="#2b2b2b"/>
<path d="M634.55,162.30 L637.06,167.68 L639.35,173.16 L641.41,178.73 L643.25,184.39 L644.84,190.12 L646.21,195.92 L647.33,201.77 L648.22,207.67 L648.86,213.61 L649.26,219.57 L649.42,225.56 L649.34,231.56 L649.01,237.56 L648.44,243.55 L647.63,249.53 L646.58,255.48 L645.29,261.39 L643.77,267.26 L642.01,273.08 L640.01,278.83 L637.79,284.51 L635.35,290.12 L632.68,295.63 L629.80,301.05 L626.70,306.36 L623.40,311.56 L619.89,316.63 L616.19,321.58 L612.29,326.39 L608.21,331.05 L603.95,335.56 L599.51,339.92 L594.91,344.11 L590.15,348.12 L585.24,351.96 L580.19,355.62 L574.99,359.08 L569.67,362.35 L564.24,365.42 L558.68,368.28 L553.03,370.94 L547.28,373.38 L541.45,375.61 L535.54,377.61 L529.56,379.39 L523.52,380.95 L517.44,382.27 L511.31,383.37 L505.16,384.23 L498.99,384.86 L492.80,385.25 L486.61,385.41 L480.43,385.34 L474.27,385.02 L468.14,384.48 L462.04,383.69 L455.99,382.68 L449.99,381.43 L444.06,379.96 L438.20,378.25 L432.42,376.33 L426.74,374.18 L421.15,371.81 L415.68,369.23 L410.32,366.44 L405.09,363.44 L399.99,360.24 L395.04,356.84 L390.23,353.25 L385.58,349.48 L381.09,345.52 L376.78,341.39 L372.64,337.09 L368.68,332.64 L364.92,328.02 L361.35,323.26 L357.98,318.36 L354.82,313.33 L351.87,308.18 L349.14,302.90 L346.62,297.52 L344.33,292.04 L342.27,286.47 L340.44,280.81 L338.84,275.08 L337.48,269.29 L336.35,263.43 L335.47,257.53 L334.82,251.60 L334.42,245.63 L334.26,239.64 L334.34,233.64 L334.67,227.64 L335.24,221.65 L336.05,215.67 L337.10,209.72 L338.39,203.81 L339.92,197.94 L341.68,192.12 L343.67,186.37 L345.89,180.69 L348.33,175.08 L351.00,169.57 L353.88,164.15 L356.98,158.84 L360.28,153.65 L363.79,148.57 L367.50,143.62 L371.39,138.81 L375.48,134.15 L379.74,129.64 L384.17,125.28 L388.77,121.10 L393.53,117.08 L398.44,113.24 L403.50,109.59 L408.69,106.12 L414.01,102.85 L419.45,99.78 L425.00,96.92 L430.65,94.26 L436.40,91.82 L442.23,89.60 L448.14,87.59 L454.12,85.81 L460.16,84.26 L466.24,82.93 L472.37,81.83 L478.52,80.97 L484.70,80.34 L490.88,79.95 L497.07,79.79 L503.25,79.87 L509.41,80.18 L515.55,80.73 L521.64,81.51 L527.70,82.52 L533.69,83.77 L539.62,85.24 L545.48,86.95 L551.26,88.87 L556.94,91.02 L562.53,93.39 L568.00,95.97 L573.36,98.77 L578.59,101.76 L583.69,104.96 L588.65,108.36 L593.45,111.95 L598.10,115.73 L602.59,119.68 L606.91,123.81 L611.04,128.11 L615.00,132.57 L618.76,137.18 L622.33,141.94 L625.70,146.84 L628.86,151.87 L631.81,157.03Z" fill="#2b2b2b"/>
<path d="M635.03,162.93 L637.55,168.31 L639.84,173.80 L641.90,179.38 L643.74,185.04 L645.34,190.77 L646.70,196.57 L647.83,202.43 L648.71,208.34 L649.36,214.28 L649.76,220.25 L649.92,226.25 L649.84,232.25 L649.51,238.26 L648.94,244.25 L648.13,250.24 L647.08,256.19 L645.79,262.11 L644.26,267.99 L642.50,273.81 L640.50,279.57 L638.28,285.25 L635.83,290.86 L633.16,296.38 L630.28,301.80 L627.18,307.12 L623.87,312.32 L620.36,317.40 L616.65,322.35 L612.75,327.17 L608.67,331.83 L604.40,336.35 L599.96,340.71 L595.36,344.90 L590.60,348.92 L585.68,352.76 L580.62,356.42 L575.42,359.89 L570.10,363.16 L564.66,366.23 L559.10,369.10 L553.44,371.76 L547.69,374.20 L541.85,376.43 L535.93,378.44 L529.95,380.22 L523.91,381.77 L517.82,383.10 L511.69,384.20 L505.53,385.06 L499.35,385.69 L493.15,386.08 L486.96,386.24 L480.78,386.17 L474.61,385.85 L468.47,385.31 L462.37,384.52 L456.31,383.51 L450.31,382.26 L444.37,380.78 L438.50,379.08 L432.72,377.15 L427.03,375.00 L421.44,372.63 L415.96,370.05 L410.60,367.25 L405.37,364.25 L400.26,361.05 L395.30,357.64 L390.49,354.05 L385.84,350.27 L381.35,346.32 L377.03,342.18 L372.88,337.88 L368.93,333.42 L365.16,328.80 L361.59,324.04 L358.21,319.13 L355.05,314.10 L352.10,308.94 L349.36,303.66 L346.84,298.27 L344.55,292.79 L342.49,287.21 L340.65,281.55 L339.05,275.81 L337.69,270.01 L336.56,264.15 L335.68,258.25 L335.03,252.31 L334.63,246.33 L334.47,240.34 L334.55,234.34 L334.88,228.33 L335.45,222.33 L336.26,216.35 L337.31,210.40 L338.60,204.48 L340.13,198.60 L341.89,192.78 L343.89,187.02 L346.11,181.33 L348.56,175.72 L351.23,170.21 L354.11,164.78 L357.21,159.47 L360.52,154.27 L364.03,149.18 L367.74,144.23 L371.64,139.42 L375.72,134.75 L379.99,130.24 L384.43,125.88 L389.03,121.69 L393.80,117.67 L398.71,113.82 L403.77,110.17 L408.97,106.70 L414.29,103.43 L419.74,100.35 L425.29,97.49 L430.95,94.83 L436.70,92.38 L442.54,90.16 L448.46,88.15 L454.44,86.37 L460.48,84.81 L466.57,83.48 L472.70,82.39 L478.86,81.53 L485.04,80.90 L491.24,80.50 L497.43,80.34 L503.61,80.42 L509.78,80.73 L515.92,81.28 L522.03,82.06 L528.08,83.08 L534.09,84.33 L540.02,85.80 L545.89,87.51 L551.67,89.44 L557.36,91.59 L562.95,93.96 L568.43,96.54 L573.79,99.34 L579.03,102.34 L584.13,105.54 L589.09,108.94 L593.90,112.53 L598.55,116.31 L603.05,120.27 L607.37,124.40 L611.51,128.70 L615.47,133.17 L619.23,137.78 L622.81,142.55 L626.18,147.45 L629.34,152.49 L632.29,157.65Z" fill="#2b2b2b"/>
<path d="M635.51,163.55 L638.03,168.95 L640.33,174.44 L642.39,180.02 L644.23,185.69 L645.83,191.43 L647.20,197.23 L648.32,203.10 L649.21,209.01 L649.86,214.96 L650.26,220.93 L650.42,226.93 L650.33,232.94 L650.01,238.95 L649.44,244.96 L648.62,250.94 L647.57,256.90 L646.28,262.83 L644.75,268.71 L642.99,274.54 L640.99,280.30 L638.77,285.99 L636.32,291.61 L633.65,297.13 L630.76,302.56 L627.66,307.88 L624.35,313.08 L620.83,318.17 L617.12,323.12 L613.22,327.94 L609.13,332.62 L604.86,337.14 L600.42,341.50 L595.81,345.69 L591.04,349.72 L586.12,353.56 L581.06,357.22 L575.85,360.69 L570.53,363.97 L565.08,367.05 L559.51,369.92 L553.85,372.58 L548.09,375.02 L542.25,377.25 L536.33,379.26 L530.34,381.04 L524.29,382.60 L518.19,383.93 L512.06,385.03 L505.89,385.89 L499.71,386.52 L493.51,386.92 L487.31,387.07 L481.12,387.00 L474.95,386.68 L468.80,386.14 L462.69,385.35 L456.63,384.34 L450.62,383.09 L444.68,381.61 L438.81,379.90 L433.02,377.97 L427.33,375.82 L421.73,373.45 L416.25,370.86 L410.88,368.06 L405.64,365.06 L400.53,361.85 L395.57,358.45 L390.75,354.85 L386.09,351.07 L381.60,347.11 L377.28,342.97 L373.13,338.67 L369.17,334.20 L365.40,329.58 L361.82,324.81 L358.45,319.90 L355.28,314.86 L352.32,309.70 L349.59,304.42 L347.07,299.02 L344.77,293.53 L342.71,287.95 L340.87,282.28 L339.27,276.54 L337.90,270.74 L336.78,264.87 L335.89,258.96 L335.24,253.01 L334.84,247.04 L334.68,241.04 L334.77,235.03 L335.09,229.02 L335.66,223.01 L336.48,217.03 L337.53,211.07 L338.82,205.14 L340.35,199.26 L342.11,193.43 L344.11,187.67 L346.33,181.98 L348.78,176.36 L351.45,170.84 L354.34,165.41 L357.44,160.09 L360.75,154.89 L364.27,149.80 L367.98,144.85 L371.88,140.03 L375.97,135.35 L380.24,130.83 L384.68,126.47 L389.29,122.28 L394.06,118.25 L398.98,114.41 L404.04,110.75 L409.25,107.28 L414.57,104.00 L420.02,100.92 L425.58,98.05 L431.25,95.39 L437.01,92.95 L442.85,90.72 L448.77,88.71 L454.76,86.93 L460.81,85.37 L466.91,84.04 L473.04,82.94 L479.21,82.08 L485.39,81.45 L491.59,81.05 L497.79,80.90 L503.98,80.97 L510.15,81.29 L516.30,81.83 L522.41,82.62 L528.47,83.63 L534.48,84.88 L540.42,86.36 L546.29,88.07 L552.08,90.00 L557.77,92.15 L563.37,94.52 L568.85,97.11 L574.22,99.91 L579.46,102.91 L584.57,106.12 L589.53,109.52 L594.35,113.12 L599.01,116.90 L603.50,120.86 L607.82,125.00 L611.97,129.30 L615.93,133.77 L619.70,138.39 L623.28,143.16 L626.65,148.07 L629.82,153.11 L632.78,158.27Z" fill="#2b2b2b"/>
<path d="M636.00,164.18 L638.52,169.58 L640.82,175.07 L642.89,180.66 L644.72,186.33 L646.33,192.08 L647.69,197.89 L648.82,203.76 L649.71,209.68 L650.35,215.63 L650.76,221.61 L650.92,227.62 L650.83,233.63 L650.50,239.65 L649.93,245.66 L649.12,251.65 L648.07,257.62 L646.77,263.55 L645.24,269.43 L643.48,275.26 L641.48,281.03 L639.26,286.73 L636.80,292.35 L634.13,297.88 L631.24,303.31 L628.13,308.64 L624.82,313.85 L621.30,318.94 L617.59,323.90 L613.68,328.72 L609.59,333.40 L605.32,337.92 L600.87,342.29 L596.26,346.49 L591.48,350.52 L586.56,354.36 L581.49,358.03 L576.28,361.50 L570.95,364.78 L565.50,367.86 L559.93,370.73 L554.26,373.39 L548.50,375.84 L542.65,378.07 L536.72,380.08 L530.73,381.87 L524.67,383.43 L518.57,384.76 L512.43,385.86 L506.26,386.72 L500.07,387.35 L493.87,387.75 L487.66,387.91 L481.46,387.83 L475.29,387.52 L469.14,386.97 L463.02,386.18 L456.95,385.17 L450.94,383.92 L444.99,382.44 L439.12,380.73 L433.32,378.80 L427.62,376.64 L422.02,374.27 L416.53,371.68 L411.16,368.88 L405.92,365.87 L400.80,362.66 L395.83,359.26 L391.01,355.66 L386.35,351.87 L381.85,347.91 L377.53,343.76 L373.38,339.46 L369.41,334.99 L365.64,330.36 L362.06,325.59 L358.68,320.67 L355.51,315.63 L352.55,310.46 L349.81,305.17 L347.29,299.78 L344.99,294.28 L342.92,288.69 L341.09,283.02 L339.48,277.27 L338.12,271.46 L336.99,265.59 L336.10,259.68 L335.46,253.72 L335.05,247.74 L334.89,241.74 L334.98,235.72 L335.30,229.70 L335.87,223.70 L336.69,217.70 L337.74,211.74 L339.03,205.81 L340.56,199.92 L342.33,194.09 L344.33,188.32 L346.55,182.62 L349.00,177.00 L351.68,171.47 L354.57,166.04 L357.68,160.72 L360.99,155.51 L364.51,150.42 L368.22,145.46 L372.13,140.63 L376.22,135.96 L380.49,131.43 L384.94,127.07 L389.55,122.87 L394.33,118.84 L399.25,114.99 L404.32,111.33 L409.52,107.85 L414.86,104.57 L420.31,101.50 L425.88,98.62 L431.55,95.96 L437.31,93.51 L443.16,91.28 L449.09,89.27 L455.08,87.48 L461.14,85.93 L467.24,84.60 L473.38,83.50 L479.55,82.63 L485.74,82.00 L491.94,81.61 L498.15,81.45 L504.34,81.53 L510.52,81.84 L516.67,82.39 L522.79,83.17 L528.86,84.19 L534.87,85.44 L540.82,86.92 L546.69,88.63 L552.48,90.56 L558.18,92.71 L563.78,95.09 L569.27,97.68 L574.65,100.48 L579.89,103.48 L585.00,106.69 L589.97,110.10 L594.79,113.70 L599.46,117.48 L603.96,121.45 L608.28,125.59 L612.43,129.90 L616.40,134.37 L620.17,138.99 L623.75,143.77 L627.13,148.68 L630.30,153.73 L633.26,158.90Z" fill="#2b2b2b"/>
<path d="M636.48,164.81 L639.01,170.21 L641.31,175.71 L643.38,181.31 L645.21,186.98 L646.82,192.73 L648.19,198.55 L649.32,204.42 L650.20,210.34 L650.85,216.30 L651.25,222.29 L651.41,228.30 L651.33,234.32 L651.00,240.35 L650.43,246.36 L649.62,252.36 L648.56,258.33 L647.27,264.26 L645.74,270.16 L643.97,275.99 L641.97,281.77 L639.74,287.47 L637.29,293.10 L634.61,298.63 L631.72,304.07 L628.61,309.40 L625.29,314.61 L621.77,319.71 L618.06,324.67 L614.15,329.50 L610.05,334.18 L605.77,338.71 L601.32,343.08 L596.70,347.28 L591.93,351.31 L587.00,355.16 L581.92,358.83 L576.71,362.31 L571.38,365.59 L565.92,368.67 L560.35,371.55 L554.67,374.21 L548.90,376.66 L543.05,378.90 L537.11,380.91 L531.11,382.70 L525.06,384.26 L518.95,385.59 L512.80,386.69 L506.63,387.55 L500.43,388.18 L494.22,388.58 L488.01,388.74 L481.81,388.66 L475.62,388.35 L469.47,387.80 L463.35,387.01 L457.27,385.99 L451.25,384.74 L445.30,383.26 L439.42,381.55 L433.62,379.62 L427.92,377.46 L422.31,375.09 L416.82,372.50 L411.44,369.69 L406.19,366.68 L401.08,363.47 L396.10,360.06 L391.28,356.46 L386.61,352.67 L382.11,348.70 L377.77,344.56 L373.62,340.24 L369.65,335.77 L365.87,331.14 L362.29,326.36 L358.91,321.44 L355.74,316.39 L352.78,311.22 L350.03,305.93 L347.51,300.53 L345.21,295.03 L343.14,289.43 L341.30,283.76 L339.70,278.01 L338.33,272.19 L337.20,266.31 L336.31,260.39 L335.67,254.43 L335.26,248.44 L335.10,242.43 L335.19,236.41 L335.52,230.39 L336.09,224.38 L336.90,218.38 L337.95,212.41 L339.25,206.47 L340.78,200.58 L342.55,194.74 L344.55,188.97 L346.77,183.27 L349.23,177.64 L351.90,172.11 L354.80,166.67 L357.91,161.34 L361.22,156.13 L364.74,151.03 L368.46,146.07 L372.37,141.24 L376.47,136.56 L380.75,132.03 L385.20,127.66 L389.81,123.46 L394.59,119.43 L399.52,115.57 L404.59,111.91 L409.80,108.43 L415.14,105.15 L420.60,102.07 L426.17,99.19 L431.85,96.53 L437.62,94.08 L443.47,91.84 L449.40,89.83 L455.40,88.04 L461.46,86.48 L467.57,85.15 L473.71,84.05 L479.89,83.19 L486.09,82.56 L492.30,82.16 L498.51,82.00 L504.71,82.08 L510.89,82.39 L517.05,82.94 L523.17,83.73 L529.24,84.74 L535.26,85.99 L541.22,87.48 L547.10,89.18 L552.89,91.12 L558.60,93.28 L564.20,95.65 L569.70,98.24 L575.07,101.05 L580.33,104.06 L585.44,107.27 L590.42,110.68 L595.24,114.28 L599.91,118.07 L604.41,122.04 L608.74,126.18 L612.90,130.50 L616.87,134.97 L620.64,139.60 L624.23,144.38 L627.61,149.29 L630.78,154.34 L633.74,159.52Z" fill="#2b2b2b"/>
<path d="M636.97,165.44 L639.49,170.84 L641.79,176.35 L643.87,181.95 L645.71,187.63 L647.31,193.39 L648.68,199.21 L649.81,205.09 L650.70,211.01 L651.35,216.98 L651.75,222.97 L651.91,228.99 L651.83,235.02 L651.50,241.04 L650.93,247.06 L650.11,253.07 L649.06,259.04 L647.76,264.98 L646.23,270.88 L644.46,276.72 L642.46,282.50 L640.23,288.21 L637.77,293.84 L635.10,299.38 L632.20,304.82 L629.09,310.16 L625.77,315.38 L622.25,320.48 L618.52,325.44 L614.61,330.28 L610.51,334.96 L606.23,339.49 L601.77,343.87 L597.15,348.07 L592.37,352.11 L587.44,355.97 L582.36,359.64 L577.14,363.12 L571.80,366.40 L566.34,369.48 L560.76,372.36 L555.08,375.03 L549.31,377.48 L543.45,379.72 L537.51,381.73 L531.50,383.52 L525.44,385.08 L519.33,386.41 L513.18,387.51 L506.99,388.38 L500.79,389.01 L494.58,389.41 L488.36,389.57 L482.15,389.49 L475.96,389.18 L469.80,388.63 L463.67,387.84 L457.60,386.82 L451.57,385.57 L445.61,384.09 L439.73,382.38 L433.92,380.44 L428.21,378.28 L422.60,375.91 L417.10,373.31 L411.72,370.51 L406.47,367.49 L401.35,364.28 L396.37,360.87 L391.54,357.26 L386.87,353.47 L382.36,349.49 L378.02,345.35 L373.87,341.03 L369.89,336.55 L366.11,331.92 L362.53,327.14 L359.14,322.21 L355.97,317.16 L353.00,311.98 L350.26,306.68 L347.73,301.28 L345.43,295.77 L343.36,290.17 L341.52,284.49 L339.91,278.74 L338.54,272.91 L337.41,267.03 L336.52,261.11 L335.88,255.14 L335.47,249.15 L335.31,243.13 L335.40,237.11 L335.73,231.08 L336.30,225.06 L337.11,219.06 L338.17,213.08 L339.46,207.14 L341.00,201.24 L342.76,195.40 L344.77,189.62 L347.00,183.91 L349.45,178.28 L352.13,172.74 L355.03,167.30 L358.14,161.97 L361.46,156.75 L364.98,151.65 L368.70,146.68 L372.62,141.85 L376.72,137.16 L381.00,132.63 L385.45,128.25 L390.07,124.05 L394.86,120.01 L399.79,116.16 L404.87,112.49 L410.08,109.01 L415.42,105.72 L420.89,102.64 L426.47,99.76 L432.15,97.09 L437.92,94.64 L443.78,92.40 L449.72,90.39 L455.72,88.60 L461.79,87.04 L467.90,85.71 L474.05,84.61 L480.23,83.74 L486.44,83.11 L492.65,82.71 L498.87,82.55 L505.07,82.63 L511.26,82.95 L517.43,83.50 L523.55,84.28 L529.63,85.30 L535.66,86.55 L541.61,88.03 L547.50,89.74 L553.30,91.68 L559.01,93.84 L564.62,96.22 L570.12,98.81 L575.50,101.62 L580.76,104.63 L585.88,107.84 L590.86,111.26 L595.69,114.86 L600.36,118.65 L604.87,122.63 L609.20,126.78 L613.36,131.09 L617.33,135.57 L621.11,140.20 L624.70,144.99 L628.08,149.91 L631.26,154.96 L634.22,160.14Z" fill="#2b2b2b"/>
<path d="M637.45,166.07 L639.98,171.48 L642.28,176.99 L644.36,182.59 L646.20,188.28 L647.81,194.04 L649.18,199.87 L650.31,205.75 L651.20,211.68 L651.85,217.65 L652.25,223.65 L652.41,229.68 L652.33,235.71 L652.00,241.74 L651.42,247.76 L650.61,253.77 L649.55,259.75 L648.26,265.70 L646.72,271.60 L644.95,277.45 L642.95,283.24 L640.72,288.95 L638.26,294.58 L635.58,300.13 L632.68,305.57 L629.57,310.91 L626.24,316.14 L622.72,321.24 L618.99,326.22 L615.07,331.05 L610.97,335.74 L606.68,340.28 L602.23,344.66 L597.60,348.87 L592.81,352.91 L587.88,356.77 L582.79,360.44 L577.57,363.92 L572.23,367.21 L566.76,370.30 L561.18,373.18 L555.49,375.85 L549.71,378.30 L543.85,380.54 L537.90,382.56 L531.89,384.35 L525.82,385.91 L519.71,387.24 L513.55,388.34 L507.36,389.21 L501.15,389.84 L494.93,390.24 L488.71,390.40 L482.50,390.32 L476.30,390.01 L470.13,389.46 L464.00,388.67 L457.92,387.65 L451.89,386.40 L445.92,384.92 L440.03,383.20 L434.22,381.27 L428.51,379.10 L422.89,376.72 L417.39,374.13 L412.00,371.32 L406.74,368.31 L401.62,365.09 L396.63,361.67 L391.80,358.06 L387.12,354.27 L382.61,350.29 L378.27,346.14 L374.11,341.82 L370.14,337.33 L366.35,332.70 L362.76,327.91 L359.38,322.99 L356.20,317.93 L353.23,312.74 L350.48,307.44 L347.95,302.03 L345.65,296.52 L343.58,290.92 L341.74,285.23 L340.13,279.47 L338.76,273.64 L337.63,267.76 L336.74,261.82 L336.09,255.85 L335.69,249.85 L335.53,243.83 L335.61,237.80 L335.94,231.77 L336.51,225.74 L337.32,219.73 L338.38,213.75 L339.68,207.81 L341.21,201.90 L342.98,196.06 L344.98,190.27 L347.22,184.56 L349.68,178.92 L352.36,173.38 L355.26,167.93 L358.37,162.59 L361.69,157.37 L365.22,152.26 L368.94,147.29 L372.86,142.45 L376.97,137.76 L381.25,133.23 L385.71,128.85 L390.33,124.64 L395.12,120.60 L400.06,116.74 L405.14,113.07 L410.36,109.58 L415.71,106.30 L421.18,103.21 L426.76,100.33 L432.44,97.66 L438.22,95.20 L444.09,92.97 L450.03,90.95 L456.04,89.16 L462.11,87.60 L468.23,86.26 L474.39,85.16 L480.58,84.30 L486.78,83.66 L493.00,83.27 L499.22,83.11 L505.44,83.18 L511.63,83.50 L517.80,84.05 L523.93,84.83 L530.02,85.86 L536.05,87.11 L542.01,88.59 L547.90,90.30 L553.71,92.24 L559.43,94.40 L565.04,96.78 L570.54,99.38 L575.93,102.19 L581.19,105.20 L586.32,108.42 L591.30,111.84 L596.13,115.44 L600.81,119.24 L605.32,123.22 L609.66,127.37 L613.82,131.69 L617.80,136.17 L621.58,140.81 L625.17,145.60 L628.56,150.52 L631.74,155.58 L634.70,160.77Z" fill="#2b2b2b"/>
<path d="M637.94,166.69 L640.47,172.11 L642.77,177.63 L644.85,183.23 L646.69,188.93 L648.30,194.69 L649.67,200.53 L650.80,206.42 L651.70,212.35 L652.34,218.33 L652.75,224.33 L652.91,230.36 L652.82,236.40 L652.49,242.44 L651.92,248.47 L651.11,254.48 L650.05,260.47 L648.75,266.42 L647.22,272.33 L645.44,278.18 L643.44,283.97 L641.21,289.69 L638.74,295.33 L636.06,300.88 L633.16,306.33 L630.04,311.67 L626.72,316.90 L623.19,322.01 L619.46,326.99 L615.54,331.83 L611.43,336.52 L607.14,341.07 L602.68,345.45 L598.05,349.66 L593.26,353.70 L588.32,357.57 L583.23,361.24 L578.01,364.73 L572.65,368.02 L567.18,371.11 L561.59,373.99 L555.90,376.67 L550.12,379.12 L544.24,381.36 L538.30,383.38 L532.28,385.17 L526.21,386.74 L520.08,388.07 L513.92,389.17 L507.73,390.04 L501.51,390.67 L495.29,391.07 L489.06,391.23 L482.84,391.15 L476.64,390.84 L470.47,390.29 L464.33,389.50 L458.24,388.48 L452.20,387.23 L446.23,385.74 L440.34,384.03 L434.52,382.09 L428.80,379.93 L423.18,377.54 L417.67,374.95 L412.28,372.13 L407.02,369.12 L401.89,365.90 L396.90,362.48 L392.06,358.86 L387.38,355.07 L382.87,351.08 L378.52,346.93 L374.36,342.60 L370.38,338.12 L366.59,333.48 L363.00,328.69 L359.61,323.76 L356.43,318.69 L353.46,313.50 L350.71,308.20 L348.18,302.78 L345.87,297.26 L343.80,291.66 L341.95,285.96 L340.34,280.20 L338.97,274.36 L337.84,268.48 L336.95,262.54 L336.30,256.56 L335.90,250.56 L335.74,244.53 L335.82,238.49 L336.15,232.45 L336.72,226.42 L337.54,220.41 L338.59,214.42 L339.89,208.47 L341.43,202.56 L343.20,196.71 L345.20,190.92 L347.44,185.20 L349.90,179.56 L352.58,174.01 L355.48,168.56 L358.60,163.22 L361.93,157.99 L365.46,152.88 L369.18,147.90 L373.11,143.06 L377.21,138.37 L381.50,133.83 L385.97,129.44 L390.59,125.23 L395.38,121.19 L400.33,117.32 L405.41,113.65 L410.64,110.16 L415.99,106.87 L421.47,103.78 L427.05,100.90 L432.74,98.22 L438.53,95.77 L444.40,93.53 L450.35,91.51 L456.36,89.72 L462.44,88.15 L468.56,86.82 L474.72,85.72 L480.92,84.85 L487.13,84.22 L493.36,83.82 L499.58,83.66 L505.80,83.74 L512.00,84.05 L518.18,84.60 L524.31,85.39 L530.40,86.41 L536.44,87.66 L542.41,89.15 L548.31,90.86 L554.12,92.80 L559.84,94.97 L565.46,97.35 L570.97,99.95 L576.36,102.76 L581.63,105.77 L586.76,109.00 L591.74,112.41 L596.58,116.03 L601.26,119.83 L605.78,123.81 L610.12,127.96 L614.28,132.29 L618.26,136.77 L622.05,141.41 L625.65,146.20 L629.03,151.14 L632.22,156.20 L635.18,161.39Z" fill="#2b2b2b"/>
<path d="M638.42,167.32 L640.95,172.74 L643.26,178.26 L645.34,183.88 L647.18,189.57 L648.79,195.35 L650.17,201.18 L651.30,207.08 L652.19,213.02 L652.84,219.00 L653.25,225.02 L653.41,231.05 L653.32,237.09 L652.99,243.13 L652.42,249.17 L651.60,255.19 L650.54,261.18 L649.25,267.14 L647.71,273.05 L645.94,278.91 L643.93,284.71 L641.69,290.43 L639.23,296.07 L636.54,301.63 L633.64,307.08 L630.52,312.43 L627.19,317.67 L623.66,322.78 L619.93,327.76 L616.00,332.61 L611.89,337.31 L607.60,341.85 L603.13,346.24 L598.50,350.46 L593.70,354.50 L588.76,358.37 L583.66,362.05 L578.44,365.54 L573.08,368.83 L567.60,371.92 L562.01,374.81 L556.31,377.48 L550.52,379.94 L544.64,382.19 L538.69,384.20 L532.67,386.00 L526.59,387.56 L520.46,388.90 L514.29,390.00 L508.09,390.87 L501.87,391.51 L495.64,391.90 L489.41,392.06 L483.18,391.98 L476.98,391.67 L470.80,391.12 L464.66,390.33 L458.56,389.31 L452.52,388.05 L446.54,386.57 L440.64,384.85 L434.82,382.91 L429.10,380.75 L423.47,378.36 L417.96,375.76 L412.56,372.95 L407.29,369.93 L402.16,366.70 L397.17,363.28 L392.32,359.67 L387.64,355.86 L383.12,351.88 L378.77,347.72 L374.60,343.39 L370.62,338.90 L366.83,334.25 L363.23,329.46 L359.84,324.53 L356.66,319.46 L353.69,314.26 L350.93,308.95 L348.40,303.53 L346.09,298.01 L344.01,292.40 L342.17,286.70 L340.56,280.93 L339.18,275.09 L338.05,269.20 L337.16,263.25 L336.51,257.27 L336.11,251.26 L335.95,245.23 L336.03,239.19 L336.36,233.14 L336.93,227.11 L337.75,221.09 L338.81,215.09 L340.11,209.14 L341.64,203.22 L343.42,197.37 L345.42,191.57 L347.66,185.85 L350.12,180.20 L352.81,174.65 L355.71,169.19 L358.83,163.84 L362.16,158.61 L365.69,153.49 L369.43,148.51 L373.35,143.67 L377.46,138.97 L381.75,134.42 L386.22,130.04 L390.86,125.82 L395.65,121.77 L400.60,117.91 L405.69,114.23 L410.92,110.74 L416.28,107.44 L421.75,104.35 L427.35,101.47 L433.04,98.79 L438.83,96.33 L444.71,94.09 L450.66,92.07 L456.68,90.28 L462.76,88.71 L468.89,87.37 L475.06,86.27 L481.26,85.40 L487.48,84.77 L493.71,84.37 L499.94,84.21 L506.17,84.29 L512.37,84.60 L518.55,85.16 L524.70,85.94 L530.79,86.97 L536.83,88.22 L542.81,89.71 L548.71,91.42 L554.53,93.36 L560.25,95.53 L565.88,97.91 L571.39,100.51 L576.79,103.33 L582.06,106.35 L587.19,109.57 L592.19,112.99 L597.03,116.61 L601.71,120.41 L606.23,124.40 L610.58,128.55 L614.75,132.88 L618.73,137.37 L622.52,142.02 L626.12,146.81 L629.51,151.75 L632.70,156.82 L635.67,162.01Z" fill="#2b2b2b"/>
<path d="M638.91,167.95 L641.44,173.38 L643.75,178.90 L645.83,184.52 L647.68,190.22 L649.29,196.00 L650.66,201.84 L651.80,207.74 L652.69,213.69 L653.34,219.68 L653.74,225.70 L653.90,231.73 L653.82,237.78 L653.49,243.83 L652.92,249.87 L652.10,255.90 L651.04,261.89 L649.74,267.86 L648.20,273.77 L646.43,279.64 L644.42,285.44 L642.18,291.17 L639.71,296.82 L637.03,302.38 L634.12,307.84 L631.00,313.19 L627.67,318.43 L624.13,323.55 L620.39,328.54 L616.47,333.39 L612.35,338.09 L608.05,342.64 L603.58,347.03 L598.94,351.25 L594.15,355.30 L589.20,359.17 L584.10,362.85 L578.87,366.35 L573.50,369.64 L568.02,372.74 L562.42,375.62 L556.72,378.30 L550.93,380.76 L545.04,383.01 L539.09,385.03 L533.06,386.82 L526.97,388.39 L520.84,389.73 L514.66,390.83 L508.46,391.70 L502.23,392.34 L496.00,392.73 L489.76,392.89 L483.53,392.82 L477.32,392.50 L471.13,391.95 L464.98,391.16 L458.88,390.14 L452.84,388.88 L446.85,387.39 L440.95,385.68 L435.13,383.73 L429.39,381.57 L423.76,379.18 L418.24,376.58 L412.84,373.76 L407.57,370.74 L402.43,367.51 L397.43,364.09 L392.59,360.47 L387.90,356.66 L383.37,352.67 L379.02,348.51 L374.85,344.18 L370.86,339.68 L367.07,335.03 L363.47,330.24 L360.07,325.30 L356.89,320.22 L353.91,315.02 L351.16,309.71 L348.62,304.28 L346.31,298.76 L344.23,293.14 L342.38,287.44 L340.77,281.66 L339.40,275.82 L338.26,269.92 L337.37,263.97 L336.72,257.98 L336.32,251.96 L336.16,245.93 L336.24,239.88 L336.57,233.83 L337.15,227.79 L337.96,221.76 L339.02,215.77 L340.32,209.80 L341.86,203.88 L343.63,198.02 L345.64,192.22 L347.88,186.49 L350.35,180.84 L353.03,175.28 L355.94,169.82 L359.06,164.47 L362.40,159.23 L365.93,154.11 L369.67,149.12 L373.59,144.27 L377.71,139.57 L382.01,135.02 L386.48,130.63 L391.12,126.41 L395.91,122.36 L400.87,118.49 L405.96,114.81 L411.20,111.31 L416.56,108.02 L422.04,104.92 L427.64,102.03 L433.34,99.36 L439.14,96.89 L445.02,94.65 L450.98,92.63 L457.00,90.83 L463.09,89.27 L469.22,87.93 L475.40,86.83 L481.60,85.96 L487.83,85.32 L494.06,84.93 L500.30,84.77 L506.53,84.84 L512.74,85.16 L518.93,85.71 L525.08,86.50 L531.18,87.52 L537.22,88.78 L543.21,90.26 L549.11,91.98 L554.94,93.92 L560.67,96.09 L566.30,98.48 L571.82,101.08 L577.22,103.90 L582.49,106.92 L587.63,110.15 L592.63,113.57 L597.48,117.19 L602.16,121.00 L606.69,124.98 L611.04,129.15 L615.21,133.48 L619.20,137.97 L622.99,142.63 L626.59,147.42 L629.99,152.36 L633.17,157.44 L636.15,162.63Z" fill="#2b2b2b"/>
<path d="M639.39,168.58 L641.93,174.01 L644.24,179.54 L646.32,185.16 L648.17,190.87 L649.78,196.65 L651.16,202.50 L652.29,208.41 L653.19,214.36 L653.84,220.35 L654.24,226.38 L654.40,232.42 L654.32,238.47 L653.99,244.53 L653.41,250.57 L652.59,256.60 L651.53,262.61 L650.23,268.57 L648.69,274.50 L646.92,280.37 L644.91,286.17 L642.67,291.91 L640.20,297.56 L637.51,303.13 L634.60,308.59 L631.47,313.95 L628.14,319.20 L624.60,324.32 L620.86,329.31 L616.93,334.16 L612.81,338.87 L608.51,343.42 L604.04,347.82 L599.39,352.04 L594.59,356.10 L589.63,359.97 L584.53,363.66 L579.30,367.15 L573.93,370.45 L568.44,373.55 L562.84,376.44 L557.13,379.12 L551.33,381.58 L545.44,383.83 L539.48,385.85 L533.45,387.65 L527.36,389.22 L521.22,390.56 L515.04,391.66 L508.83,392.53 L502.59,393.17 L496.35,393.56 L490.11,393.72 L483.87,393.65 L477.65,393.33 L471.46,392.78 L465.31,391.99 L459.20,390.97 L453.15,389.71 L447.17,388.22 L441.25,386.50 L435.43,384.56 L429.69,382.39 L424.05,380.00 L418.53,377.39 L413.12,374.58 L407.84,371.55 L402.70,368.32 L397.70,364.89 L392.85,361.27 L388.15,357.46 L383.63,353.47 L379.27,349.30 L375.10,344.97 L371.11,340.47 L367.31,335.81 L363.70,331.01 L360.31,326.07 L357.12,320.99 L354.14,315.79 L351.38,310.46 L348.84,305.03 L346.53,299.50 L344.45,293.88 L342.60,288.17 L340.99,282.39 L339.61,276.54 L338.48,270.64 L337.58,264.68 L336.93,258.69 L336.53,252.67 L336.37,246.63 L336.45,240.57 L336.78,234.52 L337.36,228.47 L338.17,222.44 L339.24,216.44 L340.54,210.47 L342.08,204.55 L343.85,198.68 L345.86,192.87 L348.10,187.14 L350.57,181.48 L353.26,175.92 L356.17,170.45 L359.30,165.09 L362.63,159.85 L366.17,154.72 L369.91,149.73 L373.84,144.88 L377.96,140.17 L382.26,135.62 L386.73,131.23 L391.38,127.00 L396.18,122.95 L401.13,119.07 L406.24,115.39 L411.47,111.89 L416.84,108.59 L422.33,105.49 L427.93,102.60 L433.64,99.92 L439.44,97.46 L445.33,95.21 L451.29,93.19 L457.32,91.39 L463.41,89.82 L469.55,88.49 L475.73,87.38 L481.94,86.51 L488.18,85.88 L494.42,85.48 L500.66,85.32 L506.90,85.40 L513.11,85.71 L519.31,86.26 L525.46,87.05 L531.57,88.08 L537.62,89.33 L543.60,90.82 L549.52,92.54 L555.34,94.49 L561.08,96.65 L566.72,99.04 L572.24,101.65 L577.65,104.47 L582.93,107.49 L588.07,110.72 L593.07,114.15 L597.92,117.77 L602.62,121.58 L607.14,125.57 L611.50,129.74 L615.67,134.08 L619.66,138.58 L623.46,143.23 L627.06,148.03 L630.46,152.98 L633.65,158.05 L636.63,163.26Z" fill="#2b2b2b"/>
<path d="M632.61,159.79 L634.30,163.35 L635.90,166.96 L637.40,170.61 L638.79,174.30 L640.09,178.03 L641.28,181.80 L642.36,185.60 L643.35,189.42 L644.23,193.28 L645.00,197.16 L645.67,201.07 L646.23,204.99 L646.68,208.93 L647.03,212.89 L647.27,216.85 L647.40,220.83 L647.43,224.81 L647.35,228.80 L647.16,232.78 L646.86,236.76 L646.45,240.74 L645.94,244.72 L645.32,248.68 L644.60,252.63 L643.77,256.56 L642.83,260.47 L641.80,264.37 L640.65,268.24 L639.41,272.08 L638.06,275.90 L636.61,279.68 L635.06,283.43 L633.41,287.14 L631.66,290.81 L629.82,294.44 L627.88,298.03 L625.84,301.57 L623.72,305.06 L621.50,308.50 L619.19,311.89 L616.80,315.22 L614.32,318.49 L611.75,321.70 L609.10,324.84 L606.37,327.92 L603.55,330.94 L600.67,333.88 L597.70,336.76 L594.66,339.56 L591.55,342.29 L588.38,344.93 L585.13,347.50 L581.82,349.99 L578.45,352.40 L575.01,354.72 L571.52,356.96 L567.97,359.11 L564.37,361.17 L560.72,363.14 L557.02,365.02 L553.28,366.81 L549.49,368.50 L545.66,370.10 L541.80,371.60 L537.89,373.01 L533.96,374.31 L530.00,375.52 L526.01,376.63 L521.99,377.64 L517.95,378.54 L513.90,379.35 L509.83,380.05 L505.74,380.65 L501.65,381.14 L497.54,381.54 L493.43,381.82 L489.32,382.01 L485.21,382.09 L481.11,382.06 L477.01,381.93 L472.92,381.70 L468.84,381.36 L464.78,380.92 L460.73,380.37 L456.70,379.73 L452.70,378.98 L448.72,378.12 L444.78,377.17 L440.86,376.11 L436.98,374.96 L433.13,373.70 L429.32,372.35 L425.56,370.89 L421.84,369.35 L418.16,367.70 L414.54,365.96 L410.97,364.13 L407.45,362.21 L403.99,360.19 L400.59,358.09 L397.25,355.90 L393.97,353.62 L390.76,351.26 L387.62,348.81 L384.55,346.28 L381.55,343.67 L378.63,340.99 L375.78,338.23 L373.01,335.39 L370.32,332.48 L367.71,329.50 L365.19,326.46 L362.76,323.34 L360.41,320.16 L358.15,316.93 L355.98,313.63 L353.90,310.27 L351.92,306.86 L350.03,303.39 L348.24,299.88 L346.54,296.32 L344.95,292.71 L343.45,289.06 L342.06,285.36 L340.76,281.63 L339.57,277.87 L338.48,274.07 L337.50,270.24 L336.62,266.38 L335.85,262.50 L335.18,258.60 L334.62,254.68 L334.16,250.73 L333.82,246.78 L333.58,242.81 L333.44,238.84 L333.42,234.86 L333.50,230.87 L333.69,226.88 L333.99,222.90 L334.39,218.92 L334.90,214.95 L335.52,210.99 L336.25,207.04 L337.08,203.11 L338.01,199.19 L339.05,195.30 L340.20,191.43 L341.44,187.58 L342.79,183.77 L344.24,179.99 L345.79,176.24 L347.44,172.53 L349.19,168.85 L351.03,165.22 L352.97,161.64 L355.00,158.09 L357.13,154.60 L359.35,151.16 L361.65,147.78 L364.05,144.45 L366.53,141.18 L369.10,137.97 L371.75,134.82 L374.48,131.74 L377.29,128.73 L380.18,125.78 L383.15,122.91 L386.18,120.11 L389.29,117.38 L392.47,114.73 L395.72,112.16 L399.03,109.67 L402.40,107.27 L405.84,104.94 L409.33,102.71 L412.87,100.56 L416.47,98.50 L420.12,96.52 L423.82,94.64 L427.57,92.86 L431.36,91.16 L435.19,89.57 L439.05,88.06 L442.95,86.66 L446.89,85.35 L450.85,84.14 L454.84,83.03 L458.86,82.03 L462.89,81.12 L466.95,80.32 L471.02,79.62 L475.11,79.02 L479.20,78.52 L483.31,78.13 L487.41,77.84 L491.52,77.66 L495.63,77.58 L499.74,77.60 L503.84,77.73 L507.93,77.97 L512.01,78.30 L516.07,78.75 L520.12,79.29 L524.14,79.94 L528.15,80.69 L532.12,81.54 L536.07,82.50 L539.99,83.55 L543.87,84.71 L547.72,85.97 L551.52,87.32 L555.29,88.77 L559.01,90.32 L562.68,91.96 L566.31,93.70 L569.88,95.53 L573.40,97.46 L576.86,99.47 L580.26,101.58 L583.60,103.77 L586.88,106.05 L590.09,108.41 L593.23,110.86 L596.30,113.38 L599.30,115.99 L602.22,118.68 L605.07,121.44 L607.84,124.28 L610.53,127.18 L613.13,130.16 L615.65,133.21 L618.09,136.32 L620.44,139.50 L622.70,142.74 L624.87,146.04 L626.95,149.40 L628.93,152.81 L630.82,156.27Z" fill="#d3d3d3" stroke="#1a1a1a" stroke-width="0.9"/>
<clipPath id="h0"><ellipse cx="506.4" cy="110.7" rx="9.9" ry="9.7"/></clipPath>
<ellipse cx="506.4" cy="110.7" rx="9.9" ry="9.7" fill="#2a2a2a" stroke="#151515" stroke-width="0.8"/>
<ellipse clip-path="url(#h0)" cx="512.9" cy="122.2" rx="9.9" ry="9.7" fill="url(#bg)" stroke="#151515" stroke-width="0.8"/>
<clipPath id="h1"><ellipse cx="575.6" cy="139.7" rx="9.9" ry="9.7"/></clipPath>
<ellipse cx="575.6" cy="139.7" rx="9.9" ry="9.7" fill="#2a2a2a" stroke="#151515" stroke-width="0.8"/>
<ellipse clip-path="url(#h1)" cx="582.1" cy="151.2" rx="9.9" ry="9.7" fill="url(#bg)" stroke="#151515" stroke-width="0.8"/>
<clipPath id="h2"><ellipse cx="612.4" cy="203" rx="9.9" ry="9.7"/></clipPath>
<ellipse cx="612.4" cy="203" rx="9.9" ry="9.7" fill="#2a2a2a" stroke="#151515" stroke-width="0.8"/>
<ellipse clip-path="url(#h2)" cx="618.9" cy="214.5" rx="9.9" ry="9.7" fill="url(#bg)" stroke="#151515" stroke-width="0.8"/>
<clipPath id="h3"><ellipse cx="602.6" cy="277" rx="9.9" ry="9.7"/></clipPath>
<ellipse cx="602.6" cy="277" rx="9.9" ry="9.7" fill="#2a2a2a" stroke="#151515" stroke-width="0.8"/>
<ellipse clip-path="url(#h3)" cx="609.1" cy="288.5" rx="9.9" ry="9.7" fill="url(#bg)" stroke="#151515" stroke-width="0.8"/>
<clipPath id="h4"><ellipse cx="550.5" cy="333" rx="9.9" ry="9.7"/></clipPath>
<ellipse cx="550.5" cy="333" rx="9.9" ry="9.7" fill="#2a2a2a" stroke="#151515" stroke-width="0.8"/>
<ellipse clip-path="url(#h4)" cx="557.0" cy="344.5" rx="9.9" ry="9.7" fill="url(#bg)" stroke="#151515" stroke-width="0.8"/>
<clipPath id="h5"><ellipse cx="474.8" cy="349.5" rx="9.9" ry="9.7"/></clipPath>
<ellipse cx="474.8" cy="349.5" rx="9.9" ry="9.7" fill="#2a2a2a" stroke="#151515" stroke-width="0.8"/>
<ellipse clip-path="url(#h5)" cx="481.3" cy="361.0" rx="9.9" ry="9.7" fill="url(#bg)" stroke="#151515" stroke-width="0.8"/>
<clipPath id="h6"><ellipse cx="405.6" cy="321.2" rx="9.9" ry="9.7"/></clipPath>
<ellipse cx="405.6" cy="321.2" rx="9.9" ry="9.7" fill="#2a2a2a" stroke="#151515" stroke-width="0.8"/>
<ellipse clip-path="url(#h6)" cx="412.1" cy="332.7" rx="9.9" ry="9.7" fill="url(#bg)" stroke="#151515" stroke-width="0.8"/>
<clipPath id="h7"><ellipse cx="368.8" cy="258" rx="9.9" ry="9.7"/></clipPath>
<ellipse cx="368.8" cy="258" rx="9.9" ry="9.7" fill="#2a2a2a" stroke="#151515" stroke-width="0.8"/>
<ellipse clip-path="url(#h7)" cx="375.3" cy="269.5" rx="9.9" ry="9.7" fill="url(#bg)" stroke="#151515" stroke-width="0.8"/>
<clipPath id="h8"><ellipse cx="378.5" cy="183.9" rx="9.9" ry="9.7"/></clipPath>
<ellipse cx="378.5" cy="183.9" rx="9.9" ry="9.7" fill="#2a2a2a" stroke="#151515" stroke-width="0.8"/>
<ellipse clip-path="url(#h8)" cx="385.0" cy="195.4" rx="9.9" ry="9.7" fill="url(#bg)" stroke="#151515" stroke-width="0.8"/>
<clipPath id="h9"><ellipse cx="431.2" cy="128" rx="9.9" ry="9.7"/></clipPath>
<ellipse cx="431.2" cy="128" rx="9.9" ry="9.7" fill="#2a2a2a" stroke="#151515" stroke-width="0.8"/>
<ellipse clip-path="url(#h9)" cx="437.7" cy="139.5" rx="9.9" ry="9.7" fill="url(#bg)" stroke="#151515" stroke-width="0.8"/>
<path d="M369,248.3 L372.3,258.8 L367.8,262" fill="none" stroke="#141414" stroke-width="0.7"/>
<path d="M401.5,312.5 L402.8,322.5 L400.5,326" fill="none" stroke="#141414" stroke-width="0.7"/>
<path d="M606.2,330.5 L608.6,340.5" stroke="#151515" stroke-width="0.7"/>
<line x1="484.8" y1="217" x2="491" y2="230.5" stroke="#35358a" stroke-width="1.1"/>
<path d="M481.3,212 L486.3,216.3 L482,218.2 Z" fill="#14143c" stroke="#14143c" stroke-width="0.6"/>
<line x1="781.6" y1="401.2" x2="790.4" y2="393.5" stroke="#30a030" stroke-width="1"/>
<path d="M786.2,395.3 L789.5,393.8 L788.3,397.2 Z" fill="#30a030"/>
<line x1="781.6" y1="401.2" x2="790.5" y2="410" stroke="#a82828" stroke-width="1.2"/>
<path d="M788.6,406 L791.4,410.8 L786.6,408.8 Z" fill="#a82828"/>
<circle cx="779.8" cy="399.3" r="1.6" fill="#2020a0"/>
<path d="M780.2,393.2 h3.2 l-3.2,4.2 h3.2 M790.8,389.2 l1.9,2.1 l1.9,-2.1 M792.7,391.3 v2.6 M793.4,406.8 l3.4,4.2 M796.8,406.8 l-3.4,4.2" fill="none" stroke="#383838" stroke-width="0.9"/>
</svg>
<div style="position:absolute;left:187px;top:421px;width:613px;height:22px;background:#f2f1f0"></div>
<div style="position:absolute;left:187.5px;top:421px;width:67px;height:17.8px;background:linear-gradient(#eceae8,#e6e4e1);border:1px solid #d3d0cc;border-top:none;border-radius:0 0 2px 2px;box-sizing:border-box"></div>
<div style="position:absolute;left:254.5px;top:421px;width:139px;height:19.5px;background:#f8f8f7;border:1px solid #d3d0cc;border-top:none;border-radius:0 0 2px 2px;box-sizing:border-box"></div>
<div style="position:absolute;left:187px;top:440.5px;width:613px;height:1px;background:#dcd9d5"></div>
<div style="position:absolute;left:191.8px;top:427.17px;font-size:9.2px;line-height:9.2px;height:11.0px;white-space:nowrap;color:#4a4a4a;">Start page</div>
<div style="position:absolute;left:274px;top:427.17px;font-size:9.2px;line-height:9.2px;height:11.0px;white-space:nowrap;color:#3c3c3c;">T30-ejemplos-tut-ini : 1*</div>
<svg style="position:absolute;left:238px;top:426px" width="12" height="10" viewBox="0 0 12 10"><path d="M2.2,1.8 L8.8,8.2 M8.8,1.8 L2.2,8.2" stroke="#4a4a4a" stroke-width="2.1"/></svg>
<svg style="position:absolute;left:378px;top:426px" width="12" height="10" viewBox="0 0 12 10"><path d="M2.2,1.8 L8.8,8.2 M8.8,1.8 L2.2,8.2" stroke="#4a4a4a" stroke-width="2.1"/></svg>
<svg style="position:absolute;left:250px;top:420px" width="20" height="20" viewBox="250 420 20 20"><path d="M258.9,426.1 H264 V428.4 H261.3 V429.4 H263.2 V431.5 H261.3 V434.2 H258.9 Z" fill="#f03a10"/><g transform="translate(264.8 431.4)"><circle r="2.9" fill="#1a3aa8"/><path d="M-0.9,-3.9 h1.8 v7.8 h-1.8 Z M-3.9,-0.9 v1.8 h7.8 v-1.8 Z" fill="#1a3aa8"/><path d="M-0.9,-3.9 h1.8 v7.8 h-1.8 Z M-3.9,-0.9 v1.8 h7.8 v-1.8 Z" fill="#1a3aa8" transform="rotate(45)"/><circle r="1.1" fill="#f4f4f4"/></g></svg>
</body></html>
